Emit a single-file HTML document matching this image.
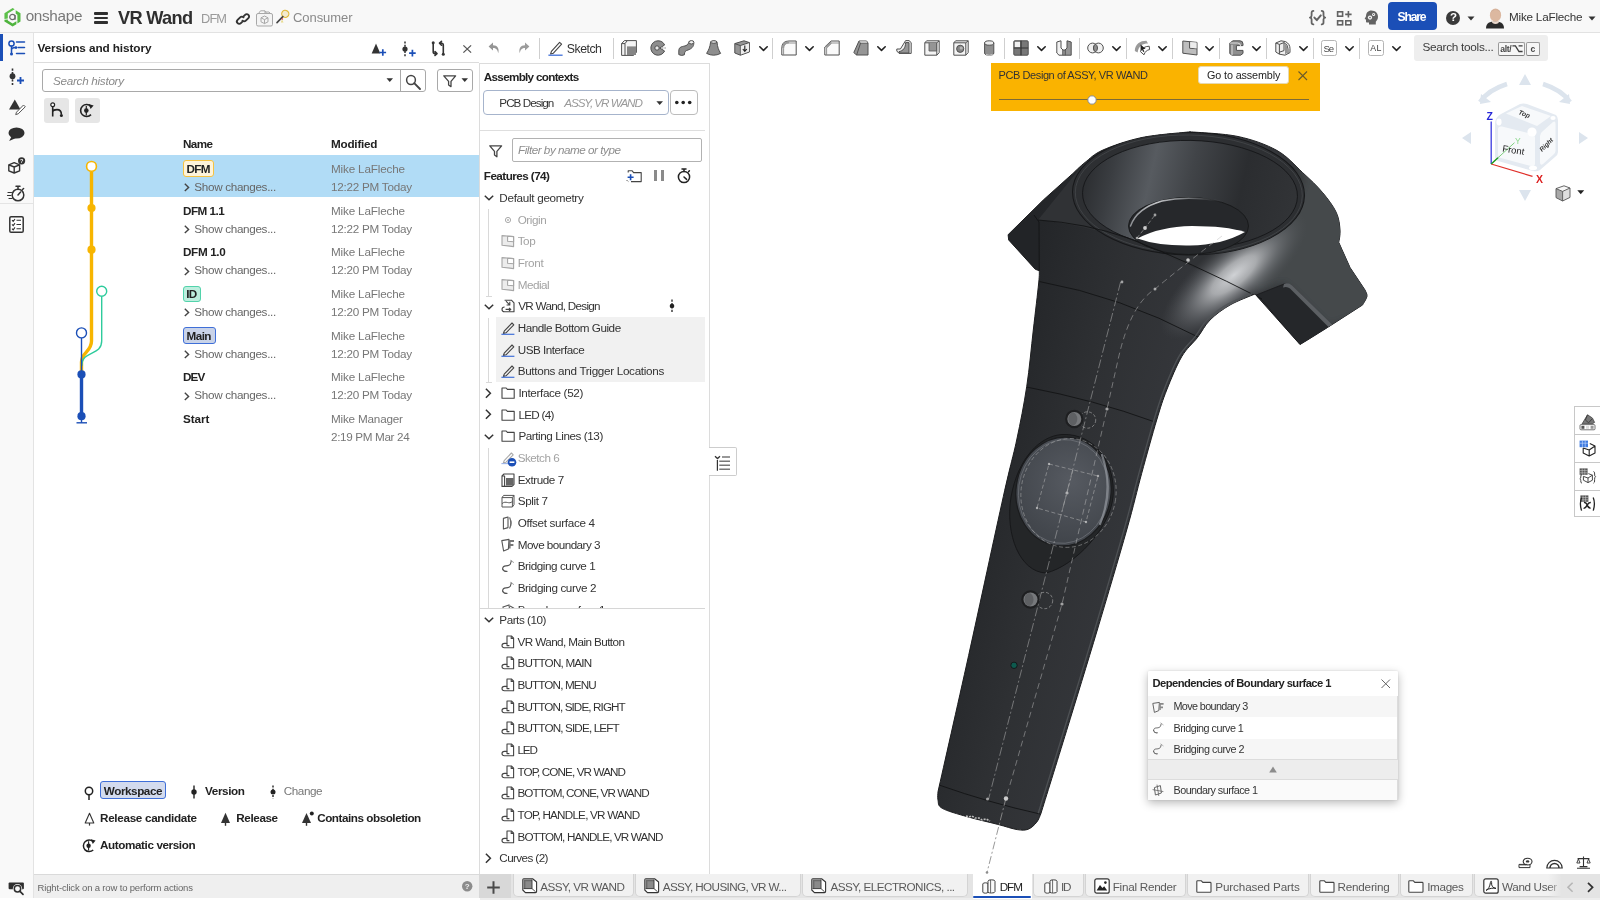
<!DOCTYPE html>
<html><head><meta charset="utf-8"><title>VR Wand</title>
<style>
*{box-sizing:border-box;margin:0;padding:0}
html,body{width:1600px;height:900px;overflow:hidden;background:#fff}
body{font-family:"Liberation Sans",sans-serif;font-size:11.5px;color:#333;position:relative;will-change:transform}
.abs{position:absolute}
.t{position:absolute;white-space:nowrap;line-height:1}
svg{position:absolute;overflow:visible}
#topbar{left:0;top:0;width:1600px;height:33px;background:#f8f8f8;border-bottom:1px solid #e2e2e2}
#rail{left:0;top:33px;width:33.7px;height:865.4px;background:#f9f9f9;border-right:1.5px solid #e3e3e3}
#vpanel{left:33.7px;top:33px;width:445.3px;height:841px;background:#fff}
#vhead{left:33.7px;top:33px;width:445.3px;height:30px;border-bottom:1px solid #dcdcdc;background:#fff}
#vfoot{left:33.7px;top:874px;width:446.3px;height:24.4px;background:#efefef;border-top:1px solid #dadada}
#fpanel{left:479px;top:63px;width:231px;height:811px;background:#fff;border-left:1px solid #dcdcdc;border-right:1px solid #dcdcdc;border-top:1px solid #dcdcdc}
#tabbar{left:480px;top:874px;width:1120px;height:26px;background:#e9e9e9}
.b{font-weight:bold}
.g{color:#767676}
</style></head><body>
<!-- ===== base panels ===== -->
<div id="topbar" class="abs"></div>
<div id="rail" class="abs"></div>
<div id="vpanel" class="abs"></div>
<div id="vhead" class="abs"></div>
<div id="vfoot" class="abs"></div>
<div id="fpanel" class="abs"></div>
<div id="tabbar" class="abs"></div>
<!-- topbar -->
<svg style="left:3.5px;top:7.5px" width="17" height="19" viewBox="0 0 17 19">
<path d="M0.44 5.2 L8.6 0.12 L10.7 1.36 L3.8 5.6 L3.8 10.5 L0.44 10.9 Z" fill="#5cc04a"/>
<path d="M11.7 2.3 L16.5 5.2 L16.5 13.6 L13.4 15.4 L13.4 6.8 L11.7 5.7 Z" fill="#55ba43"/>
<path d="M0.44 11.8 L3.8 11.4 L3.8 12.6 L8.6 15.4 L12.4 13.2 L12.4 16.2 L8.6 18.4 L0.44 13.6 Z" fill="#4fb43e"/>
<circle cx="8.4" cy="9" r="2.7" fill="none" stroke="#6d6d6d" stroke-width="1.2"/>
<path d="M11.1 7 V11.8" stroke="#6d6d6d" stroke-width="1.1"/></svg>
<div class="t" style="left:25.7px;top:7.7px;font-size:15.3px;color:#787878;letter-spacing:-0.33px;">onshape</div>
<div class="abs" style="left:93.8px;top:12.3px;width:14.2px;height:2.6px;background:#2f2f2f;border-radius:1px;"></div>
<div class="abs" style="left:93.8px;top:16.8px;width:14.2px;height:2.6px;background:#2f2f2f;border-radius:1px;"></div>
<div class="abs" style="left:93.8px;top:21.3px;width:14.2px;height:2.6px;background:#2f2f2f;border-radius:1px;"></div>
<div class="t" style="left:118.0px;top:9.2px;font-size:18.2px;color:#2f2f2f;font-weight:bold;letter-spacing:-0.69px;">VR Wand</div>
<div class="t" style="left:201.0px;top:12.6px;font-size:12.8px;color:#9a9a9a;letter-spacing:-0.86px;">DFM</div>
<svg style="left:236.0px;top:11.5px" width="14" height="14" viewBox="0 0 14 14"><g fill="none" stroke="#333" stroke-width="1.9" stroke-linecap="round">
<path d="M6.2 9.9 L4.9 11.2 a2.3 2.3 0 0 1 -3.3 -3.3 L4.2 5.3 a2.3 2.3 0 0 1 3.3 0"/>
<path d="M7.8 4.1 L9.1 2.8 a2.3 2.3 0 0 1 3.3 3.3 L9.8 8.7 a2.3 2.3 0 0 1 -3.3 0"/></g></svg>
<svg style="left:256.0px;top:9.5px" width="17" height="16.5" viewBox="0 0 17 16.5"><g fill="none" stroke="#a8a8a8" stroke-width="1">
<rect x="0.5" y="3.5" width="16" height="12.5" rx="1.5" fill="#f4f4f4"/>
<path d="M2.5 3.5 L4.5 0.8 L9 0.8 L10.5 3.5 M8 2 L13 2 L14.5 3.5"/>
<path d="M8.5 6 L12 7.8 L12 11.8 L8.5 13.6 L5 11.8 L5 7.8 Z M5 7.8 L8.5 9.6 L12 7.8 M8.5 9.6 L8.5 13.6"/></g></svg>
<svg style="left:276.0px;top:10.0px" width="14" height="14" viewBox="0 0 14 14"><ellipse cx="9.3" cy="3.8" rx="3.6" ry="3.5" fill="#f3ead0" stroke="#e2b93b" stroke-width="1.2" transform="rotate(35 9.3 3.8)"/>
<path d="M6.8 6.6 L1 12.6" stroke="#444" stroke-width="1.6" stroke-linecap="round"/>
<path d="M6 9.5 L7.5 12.5 L4.8 12.5 Z" fill="#e8d98a"/><circle cx="6.3" cy="9" r="0.8" fill="#d33"/></svg>
<div class="t" style="left:293.0px;top:10.7px;font-size:13px;color:#8a8a8a;letter-spacing:-0.07px;">Consumer</div>
<svg style="left:1309.0px;top:10.4px" width="17.5" height="15.4" viewBox="0 0 17.5 15.4"><g fill="none" stroke="#636363" stroke-width="1.8" stroke-linecap="round" stroke-linejoin="round"><path d="M4.4 0.9 Q2.6 0.9 2.6 2.8 V5.6 Q2.6 7.4 0.9 7.6 Q2.6 7.8 2.6 9.6 V12.6 Q2.6 14.4 4.4 14.4"/><path d="M12.7 0.9 Q14.5 0.9 14.5 2.8 V5.6 Q14.5 7.4 16.2 7.6 Q14.5 7.8 14.5 9.6 V12.6 Q14.5 14.4 12.7 14.4"/><path d="M5.4 7.6 L7.8 10.2 L11.8 5.4" stroke-width="2"/></g></svg>
<svg style="left:1336.0px;top:9.0px" width="16" height="16" viewBox="0 0 16 16"><g fill="none" stroke="#636363" stroke-width="1.6"><rect x="1.6" y="2.8" width="5" height="4.4"/><rect x="1.6" y="11.8" width="5" height="4"/><rect x="9.8" y="11.8" width="5" height="4"/><path d="M12.4 2 V8.6 M9.2 5.4 H15.6"/></g></svg>
<svg style="left:1363.5px;top:9.5px" width="15" height="15" viewBox="0 0 15 15"><path d="M7.3 0.6 C11.5 0.6 14 3.4 14 6.8 C14 9.3 12.8 10.7 11.8 11.8 L11.8 14.4 L5 14.4 L5 12.6 L3.2 12.6 C2.3 12.6 2 12 2 11.2 L2 9.6 L0.6 9 L2 6.2 C2.2 2.8 4.2 0.6 7.3 0.6 Z" fill="#636363"/>
<circle cx="6" cy="7.6" r="2.1" fill="#f8f8f8"/><circle cx="9.6" cy="4.4" r="1.5" fill="#f8f8f8"/><circle cx="6" cy="7.6" r="0.8" fill="#636363"/><circle cx="9.6" cy="4.4" r="0.6" fill="#636363"/></svg>
<div class="abs" style="left:1387.5px;top:2.0px;width:49.5px;height:27.5px;background:#1b4fb7;border-radius:4px;"></div>
<div class="t" style="left:1397.5px;top:10.6px;font-size:12.2px;color:#fff;font-weight:bold;letter-spacing:-1.20px;">Share</div>
<svg style="left:1446.0px;top:10.5px" width="14" height="14" viewBox="0 0 14 14"><circle cx="7" cy="7" r="7" fill="#3a3a3a"/></svg>
<div class="t" style="left:1450.0px;top:11.9px;font-size:11.5px;color:#fff;font-weight:bold;">?</div>
<svg style="left:1467.0px;top:15.5px" width="8" height="5" viewBox="0 0 8 5"><path d="M0.5 0.5 H7.5 L4 4.5 Z" fill="#333"/></svg>
<svg style="left:1485.5px;top:8.0px" width="18" height="20.5" viewBox="0 0 18 20.5"><path d="M0 20.5 C0 14.5 4 13.4 9 13.4 C14 13.4 18 14.5 18 20.5 Z" fill="#2b2b2b"/>
<ellipse cx="9.5" cy="7.2" rx="5.6" ry="6.6" fill="#dcb8a0"/><path d="M5 12 Q9.5 15.5 13.5 12 L12.5 15 Q9.5 17 6.5 15 Z" fill="#e9d7cb"/>
<path d="M4.2 5 Q9.5 -1.5 15 5 Q13 1.6 9.5 1.6 Q6 1.6 4.2 5Z" fill="#c9a892"/></svg>
<div class="t" style="left:1509.0px;top:11.2px;font-size:11.7px;color:#333;letter-spacing:-0.21px;">Mike LaFleche</div>
<svg style="left:1588.0px;top:15.5px" width="8" height="5" viewBox="0 0 8 5"><path d="M0.5 0.5 H7.5 L4 4.5 Z" fill="#333"/></svg>

<!-- rail -->
<div class="abs" style="left:0.0px;top:34.0px;width:2.5px;height:27.0px;background:#1b4fb7;"></div>
<svg style="left:8.0px;top:40.0px" width="18" height="17" viewBox="0 0 18 17"><g fill="none" stroke="#1b4fb7" stroke-width="1.5" stroke-linecap="round">
<circle cx="3.5" cy="3.5" r="2.6"/><path d="M3.5 6.2 V13.8 M3.5 10.3 C3.5 8.2 5 7.6 7.4 7.6"/><path d="M8.5 2 H16.5 M10.2 7.6 H16.5 M8.5 13.6 H16.5"/></g>
<circle cx="3.5" cy="14" r="1.5" fill="#1b4fb7"/><circle cx="8" cy="7.6" r="1.4" fill="#1b4fb7"/></svg>
<svg style="left:8.0px;top:68.0px" width="18" height="19" viewBox="0 0 18 19"><path d="M4.5 0.5 V18" stroke="#333" stroke-width="1.6" stroke-dasharray="2.2 1.4" fill="none"/><circle cx="4.5" cy="8.2" r="2.9" fill="#333"/>
<path d="M12.5 9 V16 M9 12.5 H16" stroke="#1b4fb7" stroke-width="1.8"/></svg>
<svg style="left:7.5px;top:99.0px" width="19" height="16" viewBox="0 0 19 16"><path d="M6.8 0.5 L12.5 10.5 H1 Z" fill="#333"/><path d="M8.5 13.2 L15.5 6 L17.3 7.8 L10.2 14.8 L7.7 15.6 Z" fill="#fff" stroke="#555" stroke-width="1"/></svg>
<svg style="left:8.0px;top:127.0px" width="17" height="15" viewBox="0 0 17 15"><ellipse cx="8.5" cy="6" rx="8" ry="5.6" fill="#2f2f2f"/><path d="M3.5 9.5 L1.2 14 L8 11 Z" fill="#2f2f2f"/></svg>
<svg style="left:7.5px;top:156.5px" width="18" height="17" viewBox="0 0 18 17"><g fill="none" stroke="#333" stroke-width="1.4" stroke-linejoin="round"><path d="M6.2 5.6 L11.6 7.8 L11.6 13.8 L6.2 16 L0.8 13.8 L0.8 7.8 Z M0.8 7.8 L6.2 10 L11.6 7.8 M6.2 10 V16"/></g>
<circle cx="13.6" cy="3.8" r="3.6" fill="#333"/><text x="13.6" y="6" font-size="5.6" font-weight="bold" fill="#fff" text-anchor="middle" font-family="Liberation Sans">?</text></svg>
<svg style="left:7.0px;top:185.0px" width="19" height="17" viewBox="0 0 19 17"><g fill="none" stroke="#333" stroke-width="1.5" stroke-linecap="round"><circle cx="11" cy="10" r="5.8"/><path d="M9 1.2 H13 M11 1.5 V4 M11 10 L13.6 7 M15.5 4.5 L16.6 3.5"/><path d="M1 7.5 H4.5 M0.5 10.5 H4 M2 13.5 H5" stroke-width="1.2"/></g></svg>
<div class="abs" style="left:0.0px;top:202.5px;width:33.0px;height:1.0px;background:#e4e4e4;"></div>
<svg style="left:9.0px;top:216.0px" width="15" height="17" viewBox="0 0 15 17"><rect x="0.8" y="0.8" width="13.4" height="15.4" rx="1.3" fill="#fff" stroke="#333" stroke-width="1.5"/>
<g stroke="#333" stroke-width="1.1" fill="none"><path d="M7.5 4.3 H12 M7.5 8.5 H12 M7.5 12.7 H12"/><path d="M3 4.2 L4.2 5.4 L6 3 M3 8.4 L4.2 9.6 L6 7.2 M3 12.6 L4.2 13.8 L6 11.4"/></g></svg>
<svg style="left:8.0px;top:882.3px" width="18" height="14" viewBox="0 0 18 14"><rect x="0.6" y="0.4" width="15.3" height="6.8" rx="1" fill="#2f2f2f"/><circle cx="9.5" cy="6.8" r="4.7" fill="#f9f9f9"/><circle cx="9.5" cy="6.8" r="3.2" fill="#f9f9f9" stroke="#2f2f2f" stroke-width="1.5"/><path d="M12 9.4 L15 12.4" stroke="#2f2f2f" stroke-width="1.7" stroke-linecap="round"/></svg>

<!-- versions -->
<div class="t" style="left:37.5px;top:42.6px;font-size:11.8px;color:#222;font-weight:bold;letter-spacing:-0.11px;">Versions and history</div>
<svg style="left:371.0px;top:42.0px" width="18" height="14" viewBox="0 0 18 14"><path d="M5 1.5 L9.3 11.5 H0.7 Z" fill="#333"/><path d="M11.8 7.2 V13.8 M8.5 10.5 H15.1" stroke="#1b4fb7" stroke-width="1.7"/></svg>
<svg style="left:401.0px;top:40.5px" width="18" height="16" viewBox="0 0 18 16"><path d="M4 0.5 V15.5" stroke="#333" stroke-width="1.5" stroke-dasharray="2 1.2"/><circle cx="4" cy="8" r="2.6" fill="#333"/><path d="M11.4 8.8 V15.4 M8.1 12.1 H14.7" stroke="#1b4fb7" stroke-width="1.7"/></svg>
<svg style="left:431.0px;top:41.0px" width="15" height="15" viewBox="0 0 15 15"><g fill="none" stroke="#333" stroke-width="1.6" stroke-linecap="round" stroke-linejoin="round"><path d="M2.2 2 V11 Q2.2 12.6 4 12.6 H5.5 M4 10.6 L6 12.6 L4 14.4"/><path d="M12.3 13 V4 Q12.3 2.2 10.5 2.2 H9 M10.5 0.4 L8.5 2.2 L10.5 4.2"/></g><circle cx="2.2" cy="1.8" r="1.5" fill="#333"/><circle cx="12.3" cy="13.2" r="1.5" fill="#333"/></svg>
<svg style="left:462.5px;top:45.0px" width="8.5" height="8" viewBox="0 0 8.5 8"><path d="M0.4 0.4 L8.1 7.6 M8.1 0.4 L0.4 7.6" stroke="#555" stroke-width="1.3"/></svg>
<div class="abs" style="left:42.0px;top:69.3px;width:384.0px;height:22.6px;background:#fff;border:1px solid #a9a9a9;border-radius:3px;"></div>
<div class="abs" style="left:400.3px;top:69.3px;width:1.0px;height:22.6px;background:#a9a9a9;"></div>
<div class="t" style="left:53.0px;top:75.0px;font-size:11.7px;color:#8a8a8a;font-style:italic;letter-spacing:-0.28px;">Search history</div>
<svg style="left:385.5px;top:78.3px" width="8" height="5" viewBox="0 0 8 5"><path d="M0.5 0.3 H7 L3.75 4 Z" fill="#333"/></svg>
<svg style="left:405.0px;top:74.0px" width="17" height="17" viewBox="0 0 17 17"><circle cx="6" cy="6" r="4.4" fill="none" stroke="#444" stroke-width="1.5"/><path d="M9.2 9.2 L15 15" stroke="#444" stroke-width="1.9" stroke-linecap="round"/></svg>
<div class="abs" style="left:436.8px;top:69.3px;width:35.8px;height:22.6px;background:#fff;border:1px solid #a9a9a9;border-radius:3px;"></div>
<svg style="left:443.0px;top:74.5px" width="14" height="13" viewBox="0 0 14 13"><path d="M0.8 0.8 H12.6 L8 6.4 V11.6 L5.6 10 V6.4 Z" fill="none" stroke="#444" stroke-width="1.3" stroke-linejoin="round"/></svg>
<svg style="left:461.0px;top:78.3px" width="8" height="5" viewBox="0 0 8 5"><path d="M0.5 0.3 H7 L3.75 4 Z" fill="#333"/></svg>
<div class="abs" style="left:44.0px;top:98.0px;width:25.0px;height:24.5px;background:#e6e6e6;border-radius:3px;"></div>
<div class="abs" style="left:74.5px;top:98.0px;width:25.0px;height:24.5px;background:#e6e6e6;border-radius:3px;"></div>
<svg style="left:49.5px;top:102.0px" width="14" height="17" viewBox="0 0 14 17"><circle cx="2.7" cy="2.7" r="1.9" fill="#fff" stroke="#222" stroke-width="1.2"/><path d="M2.7 4.6 V14.5 M2.7 10 C2.7 7.6 5 7.6 7 7.6 C10 7.6 11.4 9.2 11.4 12.4" fill="none" stroke="#222" stroke-width="1.6"/><circle cx="11.4" cy="13.4" r="1.5" fill="#222"/></svg>
<svg style="left:79.0px;top:102.0px" width="16" height="17" viewBox="0 0 16 17"><path d="M12 12.6 A6 6 0 1 1 12 4.4" fill="none" stroke="#222" stroke-width="1.6"/><path d="M9.6 2 L14.6 3.4 L11.6 7 Z" fill="#222"/><path d="M7.3 4 V13.4" stroke="#222" stroke-width="1.2"/><circle cx="7.3" cy="8.6" r="2.3" fill="#222"/></svg>
<div class="t" style="left:183.0px;top:138.3px;font-size:11.7px;color:#222;font-weight:bold;letter-spacing:-0.61px;">Name</div>
<div class="t" style="left:331.0px;top:138.3px;font-size:11.7px;color:#222;font-weight:bold;letter-spacing:-0.22px;">Modified</div>
<div class="abs" style="left:33.7px;top:154.7px;width:445.3px;height:42.5px;background:#b1dcf6;"></div>
<div class="abs" style="left:182.5px;top:160.3px;width:31.3px;height:16.3px;background:#fdf3da;border:1px solid #f5c242;border-radius:3px;"></div>
<div class="t" style="left:186.6px;top:163.0px;font-size:11.7px;color:#222;font-weight:bold;letter-spacing:-0.76px;">DFM</div>
<svg style="left:184.3px;top:183.3px" width="6" height="9" viewBox="0 0 6 9"><path d="M0.8 0.8 L4.6 4.4 L0.8 8" fill="none" stroke="#444" stroke-width="1.4"/></svg>
<div class="t" style="left:194.3px;top:180.8px;font-size:11.7px;color:#666;letter-spacing:-0.32px;">Show changes...</div>
<div class="t" style="left:331.0px;top:163.0px;font-size:11.7px;color:#777;letter-spacing:-0.17px;">Mike LaFleche</div>
<div class="t" style="left:331.0px;top:180.8px;font-size:11.7px;color:#777;letter-spacing:-0.25px;">12:22 PM Today</div>
<div class="t" style="left:183.0px;top:204.7px;font-size:11.7px;color:#222;font-weight:bold;letter-spacing:-0.52px;">DFM 1.1</div>
<svg style="left:184.3px;top:225.0px" width="6" height="9" viewBox="0 0 6 9"><path d="M0.8 0.8 L4.6 4.4 L0.8 8" fill="none" stroke="#444" stroke-width="1.4"/></svg>
<div class="t" style="left:194.3px;top:222.5px;font-size:11.7px;color:#666;letter-spacing:-0.32px;">Show changes...</div>
<div class="t" style="left:331.0px;top:204.7px;font-size:11.7px;color:#777;letter-spacing:-0.17px;">Mike LaFleche</div>
<div class="t" style="left:331.0px;top:222.5px;font-size:11.7px;color:#777;letter-spacing:-0.25px;">12:22 PM Today</div>
<div class="t" style="left:183.0px;top:246.4px;font-size:11.7px;color:#222;font-weight:bold;letter-spacing:-0.34px;">DFM 1.0</div>
<svg style="left:184.3px;top:266.7px" width="6" height="9" viewBox="0 0 6 9"><path d="M0.8 0.8 L4.6 4.4 L0.8 8" fill="none" stroke="#444" stroke-width="1.4"/></svg>
<div class="t" style="left:194.3px;top:264.1px;font-size:11.7px;color:#666;letter-spacing:-0.32px;">Show changes...</div>
<div class="t" style="left:331.0px;top:246.4px;font-size:11.7px;color:#777;letter-spacing:-0.17px;">Mike LaFleche</div>
<div class="t" style="left:331.0px;top:264.1px;font-size:11.7px;color:#777;letter-spacing:-0.25px;">12:20 PM Today</div>
<div class="abs" style="left:182.5px;top:285.6px;width:18.5px;height:16.8px;background:#bdeede;border:1px solid #52d3ab;border-radius:3px;"></div>
<div class="t" style="left:186.2px;top:288.1px;font-size:11.7px;color:#222;font-weight:bold;letter-spacing:-0.69px;">ID</div>
<svg style="left:184.3px;top:308.4px" width="6" height="9" viewBox="0 0 6 9"><path d="M0.8 0.8 L4.6 4.4 L0.8 8" fill="none" stroke="#444" stroke-width="1.4"/></svg>
<div class="t" style="left:194.3px;top:305.9px;font-size:11.7px;color:#666;letter-spacing:-0.32px;">Show changes...</div>
<div class="t" style="left:331.0px;top:288.1px;font-size:11.7px;color:#777;letter-spacing:-0.17px;">Mike LaFleche</div>
<div class="t" style="left:331.0px;top:305.9px;font-size:11.7px;color:#777;letter-spacing:-0.25px;">12:20 PM Today</div>
<div class="abs" style="left:182.5px;top:327.3px;width:33.0px;height:16.6px;background:#c9d3e8;border:1px solid #3f6fd8;border-radius:3px;"></div>
<div class="t" style="left:186.6px;top:329.8px;font-size:11.7px;color:#222;font-weight:bold;letter-spacing:-0.58px;">Main</div>
<svg style="left:184.3px;top:350.1px" width="6" height="9" viewBox="0 0 6 9"><path d="M0.8 0.8 L4.6 4.4 L0.8 8" fill="none" stroke="#444" stroke-width="1.4"/></svg>
<div class="t" style="left:194.3px;top:347.6px;font-size:11.7px;color:#666;letter-spacing:-0.32px;">Show changes...</div>
<div class="t" style="left:331.0px;top:329.8px;font-size:11.7px;color:#777;letter-spacing:-0.17px;">Mike LaFleche</div>
<div class="t" style="left:331.0px;top:347.6px;font-size:11.7px;color:#777;letter-spacing:-0.25px;">12:20 PM Today</div>
<div class="t" style="left:183.0px;top:371.4px;font-size:11.7px;color:#222;font-weight:bold;letter-spacing:-0.87px;">DEV</div>
<svg style="left:184.3px;top:391.8px" width="6" height="9" viewBox="0 0 6 9"><path d="M0.8 0.8 L4.6 4.4 L0.8 8" fill="none" stroke="#444" stroke-width="1.4"/></svg>
<div class="t" style="left:194.3px;top:389.2px;font-size:11.7px;color:#666;letter-spacing:-0.32px;">Show changes...</div>
<div class="t" style="left:331.0px;top:371.4px;font-size:11.7px;color:#777;letter-spacing:-0.17px;">Mike LaFleche</div>
<div class="t" style="left:331.0px;top:389.2px;font-size:11.7px;color:#777;letter-spacing:-0.25px;">12:20 PM Today</div>
<div class="t" style="left:183.0px;top:413.1px;font-size:11.7px;color:#222;font-weight:bold;letter-spacing:-0.09px;">Start</div>
<div class="t" style="left:331.0px;top:413.1px;font-size:11.7px;color:#777;letter-spacing:-0.19px;">Mike Manager</div>
<div class="t" style="left:331.0px;top:430.9px;font-size:11.7px;color:#777;letter-spacing:-0.34px;">2:19 PM Mar 24</div>
<svg style="left:0.0px;top:0.0px" width="200" height="440" viewBox="0 0 200 440"><path d="M91.5 172 V341 C91.5 352 81.5 352 81.5 362 V374" fill="none" stroke="#f7b500" stroke-width="3.4"/><path d="M101.7 296.5 V341 C101.7 356 81.8 350 81.8 366" fill="none" stroke="#2ecb9c" stroke-width="1.4"/><path d="M81.5 338 V374" fill="none" stroke="#1b4fb7" stroke-width="1.4"/><path d="M81.5 374 V416" fill="none" stroke="#1b4fb7" stroke-width="3.4"/><path d="M76.5 422.8 H87" stroke="#1b4fb7" stroke-width="1.4"/><path d="M81.5 416 V422.8" stroke="#1b4fb7" stroke-width="1.4"/><circle cx="91.5" cy="166.4" r="4.9" fill="#fff" stroke="#f7b500" stroke-width="1.6"/><circle cx="91.5" cy="208" r="4.1" fill="#f7b500"/><circle cx="91.5" cy="249.7" r="4.1" fill="#f7b500"/><circle cx="101.7" cy="291.2" r="5" fill="#fff" stroke="#2ecb9c" stroke-width="1.4"/><circle cx="81.5" cy="332.9" r="5" fill="#fff" stroke="#1b4fb7" stroke-width="1.4"/><circle cx="81.5" cy="374.4" r="4.1" fill="#1b4fb7"/><circle cx="81.5" cy="416.2" r="4.1" fill="#1b4fb7"/></svg>
<svg style="left:84.0px;top:785.5px" width="10" height="15" viewBox="0 0 10 15"><circle cx="5" cy="5" r="3.7" fill="#fff" stroke="#222" stroke-width="1.5"/><path d="M5 8.7 V14" stroke="#222" stroke-width="1.5"/></svg>
<div class="abs" style="left:100.0px;top:781.3px;width:66.0px;height:18.2px;background:#d3dbee;border:1px solid #3f6fd8;border-radius:3px;"></div>
<div class="t" style="left:103.8px;top:785.4px;font-size:11.7px;color:#222;font-weight:bold;letter-spacing:-0.43px;">Workspace</div>
<svg style="left:190.0px;top:784.5px" width="8" height="14" viewBox="0 0 8 14"><path d="M4 0.5 V13.5" stroke="#222" stroke-width="1.4"/><circle cx="4" cy="7" r="2.7" fill="#222"/></svg>
<div class="t" style="left:205.0px;top:785.4px;font-size:11.7px;color:#222;font-weight:bold;letter-spacing:-0.37px;">Version</div>
<svg style="left:269.0px;top:784.5px" width="8" height="14" viewBox="0 0 8 14"><path d="M4 0.5 V13.5" stroke="#222" stroke-width="1.4" stroke-dasharray="2 1.2"/><circle cx="4" cy="7" r="2.5" fill="#222"/></svg>
<div class="t" style="left:283.8px;top:785.4px;font-size:11.7px;color:#777;letter-spacing:-0.45px;">Change</div>
<svg style="left:83.5px;top:811.5px" width="11" height="14" viewBox="0 0 11 14"><path d="M5.5 1.2 L9.8 11 H1.2 Z" fill="#fff" stroke="#333" stroke-width="1.1" stroke-linejoin="round"/><path d="M5.5 11 V13.6" stroke="#333" stroke-width="1.2"/></svg>
<div class="t" style="left:100.0px;top:812.4px;font-size:11.7px;color:#222;font-weight:bold;letter-spacing:-0.31px;">Release candidate</div>
<svg style="left:219.5px;top:811.5px" width="11" height="14" viewBox="0 0 11 14"><path d="M5.5 0.8 L10 11 H1 Z" fill="#333"/><path d="M5.5 11 V13.8" stroke="#333" stroke-width="1.4"/></svg>
<div class="t" style="left:236.3px;top:812.4px;font-size:11.7px;color:#222;font-weight:bold;letter-spacing:-0.40px;">Release</div>
<svg style="left:300.5px;top:810.5px" width="13" height="15" viewBox="0 0 13 15"><path d="M5.5 2 L10 12 H1 Z" fill="#333"/><path d="M5.5 12 V14.8" stroke="#333" stroke-width="1.4"/><circle cx="10.8" cy="2.6" r="2" fill="#222"/></svg>
<div class="t" style="left:317.2px;top:812.4px;font-size:11.7px;color:#222;font-weight:bold;letter-spacing:-0.46px;">Contains obsoletion</div>
<svg style="left:81.5px;top:838.0px" width="15" height="15" viewBox="0 0 15 15"><path d="M11.2 12 A5.8 5.8 0 1 1 11.2 3.6" fill="none" stroke="#222" stroke-width="1.5"/><path d="M8.8 1.2 L13.6 2.6 L10.8 6 Z" fill="#222"/><path d="M6.6 3.2 V12.4" stroke="#222" stroke-width="1.1"/><circle cx="6.6" cy="7.8" r="2.2" fill="#222"/></svg>
<div class="t" style="left:100.0px;top:839.4px;font-size:11.7px;color:#222;font-weight:bold;letter-spacing:-0.40px;">Automatic version</div>
<div class="t" style="left:37.5px;top:882.8px;font-size:9.5px;color:#666;letter-spacing:-0.16px;">Right-click on a row to perform actions</div>
<svg style="left:461.6px;top:881.4px" width="10.5" height="10.5" viewBox="0 0 10.5 10.5"><circle cx="5.2" cy="5.2" r="5.2" fill="#8c8c8c"/><text x="5.2" y="8.2" font-size="8" font-weight="bold" fill="#eee" text-anchor="middle" font-family="Liberation Sans">?</text></svg>

<!-- features -->
<div class="t" style="left:483.8px;top:71.2px;font-size:11.7px;color:#222;font-weight:bold;letter-spacing:-0.70px;">Assembly contexts</div>
<div class="abs" style="left:483.3px;top:89.8px;width:185.4px;height:24.8px;background:#fff;border:1px solid #a6b4cc;border-radius:4px;"></div>
<div class="t" style="left:499.3px;top:96.6px;font-size:11.7px;color:#333;letter-spacing:-0.96px;">PCB Design</div>
<div class="t" style="left:564.2px;top:96.6px;font-size:11.7px;color:#9a9a9a;font-style:italic;letter-spacing:-1.07px;">ASSY, VR WAND</div>
<svg style="left:656.0px;top:100.6px" width="8" height="5" viewBox="0 0 8 5"><path d="M0.4 0.3 H7 L3.7 4 Z" fill="#333"/></svg>
<div class="abs" style="left:669.6px;top:89.8px;width:28.0px;height:24.8px;background:#fff;border:1px solid #bcbcbc;border-radius:4px;"></div>
<svg style="left:674.0px;top:100.0px" width="20" height="5" viewBox="0 0 20 5"><circle cx="2.8" cy="2.5" r="1.8" fill="#222"/><circle cx="9.2" cy="2.5" r="1.8" fill="#222"/><circle cx="15.7" cy="2.5" r="1.8" fill="#222"/></svg>
<div class="abs" style="left:480.0px;top:130.3px;width:225.0px;height:1.0px;background:#dedede;"></div>
<svg style="left:488.5px;top:144.5px" width="14" height="13" viewBox="0 0 14 13"><path d="M0.8 0.8 H12.6 L7.9 6.4 V11.8 L5.5 10 V6.4 Z" fill="none" stroke="#444" stroke-width="1.3" stroke-linejoin="round"/></svg>
<div class="abs" style="left:512.2px;top:137.5px;width:190.2px;height:24.3px;background:#fff;border:1px solid #b2b2b2;border-radius:2px;"></div>
<div class="t" style="left:518.0px;top:144.0px;font-size:11.7px;color:#8e8e8e;font-style:italic;letter-spacing:-0.48px;">Filter by name or type</div>
<div class="t" style="left:483.8px;top:169.5px;font-size:11.7px;color:#222;font-weight:bold;letter-spacing:-0.55px;">Features (74)</div>
<svg style="left:626.0px;top:169.5px" width="16" height="12.5" viewBox="0 0 16 12.5"><path d="M2.2 2.6 V0.8 H6.2 L7.6 2.6 H15.2 V11.6 H5" fill="none" stroke="#444" stroke-width="1.1" stroke-linejoin="round"/><path d="M1 10 Q1 11.6 2.6 11.6" fill="none" stroke="#444" stroke-width="1" stroke-dasharray="1 1"/><path d="M4.6 4.2 V10.2 M1.6 7.2 H7.6" stroke="#1b4fb7" stroke-width="1.6"/></svg>
<div class="abs" style="left:654.3px;top:170.0px;width:3.2px;height:11.3px;background:#8a8a8a;"></div>
<div class="abs" style="left:661.0px;top:170.0px;width:3.2px;height:11.3px;background:#8a8a8a;"></div>
<svg style="left:677.0px;top:167.5px" width="14" height="15.5" viewBox="0 0 14 15.5"><g fill="none" stroke="#222" stroke-width="1.5" stroke-linecap="round"><circle cx="7" cy="9" r="5.6"/><path d="M5 1 H9 M7 1.2 V3.4 M7 9 L9.6 11.4 M11.6 3.6 L12.4 2.8"/></g></svg>
<svg style="left:483.8px;top:195.2px" width="10" height="6" viewBox="0 0 10 6"><path d="M0.8 0.8 L5 4.8 L9.2 0.8" fill="none" stroke="#333" stroke-width="1.5"/></svg>
<div class="t" style="left:499.3px;top:192.0px;font-size:11.7px;color:#333;letter-spacing:-0.30px;">Default geometry</div>
<div class="abs" style="left:488.0px;top:209.0px;width:1.0px;height:86.5px;background:#d9d9d9;"></div>
<div class="abs" style="left:485.5px;top:295.5px;width:6.0px;height:1.0px;background:#d9d9d9;"></div>
<svg style="left:500.5px;top:212.5px" width="14" height="14" viewBox="0 0 14 14"><circle cx="7" cy="7" r="2.6" fill="none" stroke="#aaa" stroke-width="1"/><circle cx="7" cy="7" r="0.9" fill="#aaa"/></svg>
<div class="t" style="left:517.7px;top:213.6px;font-size:11.7px;color:#a3a3a3;letter-spacing:-0.44px;">Origin</div>
<svg style="left:500.5px;top:234.1px" width="14" height="14" viewBox="0 0 14 14"><g fill="none" stroke="#a6a6a6" stroke-width="1.1" stroke-linejoin="round"><path d="M1 1.6 L12.6 2.6 V12.6 L1 11.2 Z" fill="#ececec"/><path d="M6.6 2.2 V7.2 L12.6 7.8 V2.6 Z" fill="#fff"/></g></svg>
<div class="t" style="left:517.7px;top:235.3px;font-size:11.7px;color:#a3a3a3;letter-spacing:-0.42px;">Top</div>
<svg style="left:500.5px;top:255.8px" width="14" height="14" viewBox="0 0 14 14"><g fill="none" stroke="#a6a6a6" stroke-width="1.1" stroke-linejoin="round"><path d="M1 1.6 L12.6 2.6 V12.6 L1 11.2 Z" fill="#ececec"/><path d="M6.6 2.2 V7.2 L12.6 7.8 V2.6 Z" fill="#fff"/></g></svg>
<div class="t" style="left:517.7px;top:257.0px;font-size:11.7px;color:#a3a3a3;letter-spacing:-0.32px;">Front</div>
<svg style="left:500.5px;top:277.5px" width="14" height="14" viewBox="0 0 14 14"><g fill="none" stroke="#a6a6a6" stroke-width="1.1" stroke-linejoin="round"><path d="M1 1.6 L12.6 2.6 V12.6 L1 11.2 Z" fill="#ececec"/><path d="M6.6 2.2 V7.2 L12.6 7.8 V2.6 Z" fill="#fff"/></g></svg>
<div class="t" style="left:517.7px;top:278.6px;font-size:11.7px;color:#a3a3a3;letter-spacing:-0.49px;">Medial</div>
<svg style="left:483.8px;top:303.6px" width="10" height="6" viewBox="0 0 10 6"><path d="M0.8 0.8 L5 4.8 L9.2 0.8" fill="none" stroke="#333" stroke-width="1.5"/></svg>
<svg style="left:500.5px;top:299.2px" width="14" height="14" viewBox="0 0 14 14"><g fill="none" stroke="#444" stroke-width="1.1" stroke-linejoin="round"><path d="M3.6 1.2 H10.4 L13 3.8 V12.8 H3.6 Q1 12.8 1 10.2 Q1 8 3.6 8"/><path d="M5 2.2 L8.6 5.8 M8.8 2.8 V6 H5.6"/><path d="M4.6 10.4 H9.6 M8 8.8 L9.8 10.4 L8 12"/></g></svg>
<div class="t" style="left:518.3px;top:300.3px;font-size:11.7px;color:#333;letter-spacing:-0.73px;">VR Wand, Design</div>
<svg style="left:668.5px;top:299.2px" width="6" height="14" viewBox="0 0 6 14"><path d="M3 0.5 V13.5" stroke="#222" stroke-width="1.3" stroke-dasharray="2.2 1.2"/><circle cx="3" cy="7" r="2.3" fill="#222"/></svg>
<div class="abs" style="left:496.4px;top:317.4px;width:208.4px;height:64.6px;background:#f1f1f1;"></div>
<div class="abs" style="left:488.0px;top:318.0px;width:1.0px;height:64.0px;background:#d9d9d9;"></div>
<div class="abs" style="left:485.5px;top:382.0px;width:6.0px;height:1.0px;background:#d9d9d9;"></div>
<svg style="left:500.5px;top:320.8px" width="14" height="14" viewBox="0 0 14 14"><path d="M3.2 10.2 L11 2 L12.8 3.8 L5 11.8 L2.4 12.4 Z" fill="none" stroke="#444" stroke-width="1.1" stroke-linejoin="round"/><path d="M0.4 13.3 H13.4" stroke="#3f6fd8" stroke-width="1.2"/></svg>
<div class="t" style="left:517.7px;top:322.0px;font-size:11.7px;color:#333;letter-spacing:-0.46px;">Handle Bottom Guide</div>
<svg style="left:500.5px;top:342.5px" width="14" height="14" viewBox="0 0 14 14"><path d="M3.2 10.2 L11 2 L12.8 3.8 L5 11.8 L2.4 12.4 Z" fill="none" stroke="#444" stroke-width="1.1" stroke-linejoin="round"/><path d="M0.4 13.3 H13.4" stroke="#3f6fd8" stroke-width="1.2"/></svg>
<div class="t" style="left:517.7px;top:343.6px;font-size:11.7px;color:#333;letter-spacing:-0.48px;">USB Interface</div>
<svg style="left:500.5px;top:364.2px" width="14" height="14" viewBox="0 0 14 14"><path d="M3.2 10.2 L11 2 L12.8 3.8 L5 11.8 L2.4 12.4 Z" fill="none" stroke="#444" stroke-width="1.1" stroke-linejoin="round"/><path d="M0.4 13.3 H13.4" stroke="#3f6fd8" stroke-width="1.2"/></svg>
<div class="t" style="left:517.7px;top:365.3px;font-size:11.7px;color:#333;letter-spacing:-0.31px;">Buttons and Trigger Locations</div>
<svg style="left:485.0px;top:387.5px" width="7" height="11" viewBox="0 0 7 11"><path d="M0.9 0.8 L5.4 5.3 L0.9 9.8" fill="none" stroke="#333" stroke-width="1.5"/></svg>
<svg style="left:500.5px;top:385.8px" width="14" height="14" viewBox="0 0 14 14"><path d="M1 2 H5.2 L6.4 3.4 H13.2 V12.2 H1 Z" fill="#fff" stroke="#444" stroke-width="1.1" stroke-linejoin="round"/></svg>
<div class="t" style="left:518.4px;top:387.0px;font-size:11.7px;color:#333;letter-spacing:-0.35px;">Interface (52)</div>
<svg style="left:485.0px;top:409.2px" width="7" height="11" viewBox="0 0 7 11"><path d="M0.9 0.8 L5.4 5.3 L0.9 9.8" fill="none" stroke="#333" stroke-width="1.5"/></svg>
<svg style="left:500.5px;top:407.5px" width="14" height="14" viewBox="0 0 14 14"><path d="M1 2 H5.2 L6.4 3.4 H13.2 V12.2 H1 Z" fill="#fff" stroke="#444" stroke-width="1.1" stroke-linejoin="round"/></svg>
<div class="t" style="left:518.4px;top:408.6px;font-size:11.7px;color:#333;letter-spacing:-0.71px;">LED (4)</div>
<svg style="left:483.8px;top:433.6px" width="10" height="6" viewBox="0 0 10 6"><path d="M0.8 0.8 L5 4.8 L9.2 0.8" fill="none" stroke="#333" stroke-width="1.5"/></svg>
<svg style="left:500.5px;top:429.2px" width="14" height="14" viewBox="0 0 14 14"><path d="M1 2 H5.2 L6.4 3.4 H13.2 V12.2 H1 Z" fill="#fff" stroke="#444" stroke-width="1.1" stroke-linejoin="round"/></svg>
<div class="t" style="left:518.4px;top:430.3px;font-size:11.7px;color:#333;letter-spacing:-0.43px;">Parting Lines (13)</div>
<div class="abs" style="left:488.0px;top:447.5px;width:1.0px;height:160.0px;background:#d9d9d9;"></div>
<svg style="left:500.5px;top:450.8px" width="14" height="14" viewBox="0 0 14 14"><path d="M3.2 9.6 L10.4 2 L12.2 3.8 L5 11.2 L2.4 11.8 Z" fill="none" stroke="#aaa" stroke-width="1.1" stroke-linejoin="round"/><path d="M0.4 12.6 H8" stroke="#9bb3e6" stroke-width="1.1"/><circle cx="11" cy="11.2" r="4.3" fill="#1b4fb7"/><path d="M8.6 11.2 H13.4" stroke="#fff" stroke-width="1.6"/></svg>
<div class="t" style="left:517.7px;top:452.0px;font-size:11.7px;color:#a3a3a3;letter-spacing:-0.50px;">Sketch 6</div>
<svg style="left:500.5px;top:472.5px" width="14" height="14" viewBox="0 0 14 14"><g stroke="#444" stroke-width="1.1" fill="none" stroke-linejoin="round"><path d="M3 1 H13 V11.4 L11 13.4 H1 V3 Z"/><path d="M1 3 H3.6 V13"/></g><rect x="5" y="5" width="7.6" height="7.6" fill="#666"/></svg>
<div class="t" style="left:517.7px;top:473.7px;font-size:11.7px;color:#333;letter-spacing:-0.44px;">Extrude 7</div>
<svg style="left:500.5px;top:494.2px" width="14" height="14" viewBox="0 0 14 14"><g stroke="#555" stroke-width="1" fill="none" stroke-linejoin="round"><path d="M2.6 1.4 H13 V10.6 L11.4 13 H1 V3.6 Z"/><path d="M1 3.6 H11.4 V13 M11.4 3.6 L13 1.4"/><path d="M1 9.6 C5 6 8 11 11.4 7.4"/></g></svg>
<div class="t" style="left:517.7px;top:495.3px;font-size:11.7px;color:#333;letter-spacing:-0.35px;">Split 7</div>
<svg style="left:500.5px;top:515.9px" width="14" height="14" viewBox="0 0 14 14"><g stroke="#555" stroke-width="1.1" fill="none" stroke-linejoin="round"><path d="M2.4 2.4 L7 1 V11.6 L2.4 13 Z"/><path d="M8.6 1.4 Q11 7 8.6 12.6"/></g><path d="M9 2 Q12.6 7 9 12.4 Q10.6 7 9 2Z" fill="#777"/></svg>
<div class="t" style="left:517.7px;top:517.0px;font-size:11.7px;color:#333;letter-spacing:-0.33px;">Offset surface 4</div>
<svg style="left:500.5px;top:537.5px" width="14" height="14" viewBox="0 0 14 14"><g stroke="#555" stroke-width="1.1" fill="none" stroke-linejoin="round"><path d="M0.8 2.6 L8 1.4 L7.4 11 L2.6 13 Z"/></g><path d="M8 2 H13 V4 H9.6 V6 H12.4 V8 H9.6 V10.4 H8 Z" fill="#777"/></svg>
<div class="t" style="left:517.7px;top:538.7px;font-size:11.7px;color:#333;letter-spacing:-0.54px;">Move boundary 3</div>
<svg style="left:500.5px;top:559.2px" width="14" height="14" viewBox="0 0 14 14"><g stroke="#555" stroke-width="1.1" fill="none" stroke-linecap="round"><path d="M1.6 10 C1.6 5.6 5 7.6 8 6.2 C11 4.8 9 2.6 10.6 2"/><path d="M1.6 10 C2.4 12 4.4 12.6 6 12.4" stroke-width="1.2"/><path d="M9.6 1.4 L12.6 3.4" stroke="#999" stroke-width="0.9"/></g></svg>
<div class="t" style="left:517.7px;top:560.3px;font-size:11.7px;color:#333;letter-spacing:-0.43px;">Bridging curve 1</div>
<svg style="left:500.5px;top:580.9px" width="14" height="14" viewBox="0 0 14 14"><g stroke="#555" stroke-width="1.1" fill="none" stroke-linecap="round"><path d="M1.6 10 C1.6 5.6 5 7.6 8 6.2 C11 4.8 9 2.6 10.6 2"/><path d="M1.6 10 C2.4 12 4.4 12.6 6 12.4" stroke-width="1.2"/><path d="M9.6 1.4 L12.6 3.4" stroke="#999" stroke-width="0.9"/></g></svg>
<div class="t" style="left:517.7px;top:582.0px;font-size:11.7px;color:#333;letter-spacing:-0.38px;">Bridging curve 2</div>
<svg style="left:500.5px;top:602.5px" width="14" height="14" viewBox="0 0 14 14"><g stroke="#555" stroke-width="1.1" fill="none"><path d="M2 4 L8 2 L9 10 L3 12 Z"/><path d="M9 3 L12.6 5 L11 12"/></g></svg>
<div class="t" style="left:517.7px;top:603.7px;font-size:11.7px;color:#333;letter-spacing:-0.79px;">Boundary surface 1</div>
<div class="abs" style="left:480.0px;top:608.2px;width:229.0px;height:7.4px;background:#fff;"></div>
<div class="abs" style="left:480.0px;top:607.8px;width:225.0px;height:1.0px;background:#d6d6d6;"></div>
<svg style="left:483.8px;top:617.2px" width="10" height="6" viewBox="0 0 10 6"><path d="M0.8 0.8 L5 4.8 L9.2 0.8" fill="none" stroke="#333" stroke-width="1.5"/></svg>
<div class="t" style="left:499.3px;top:613.9px;font-size:11.7px;color:#333;letter-spacing:-0.46px;">Parts (10)</div>
<svg style="left:500.5px;top:634.5px" width="14" height="14" viewBox="0 0 14 14"><g fill="none" stroke="#444" stroke-width="1.1" stroke-linejoin="round"><path d="M6 1 H10.4 L12.6 3.2 V12.8 H3.4 Q1 12.8 1 10.6 Q1 8.4 3.4 8.4 H6 Z"/><path d="M10.2 1.2 V3.4 H12.4"/><path d="M6 8.4 V10.6 H8.4"/></g></svg>
<div class="t" style="left:517.5px;top:635.6px;font-size:11.7px;color:#333;letter-spacing:-0.58px;">VR Wand, Main Button</div>
<svg style="left:500.5px;top:656.1px" width="14" height="14" viewBox="0 0 14 14"><g fill="none" stroke="#444" stroke-width="1.1" stroke-linejoin="round"><path d="M6 1 H10.4 L12.6 3.2 V12.8 H3.4 Q1 12.8 1 10.6 Q1 8.4 3.4 8.4 H6 Z"/><path d="M10.2 1.2 V3.4 H12.4"/><path d="M6 8.4 V10.6 H8.4"/></g></svg>
<div class="t" style="left:517.5px;top:657.3px;font-size:11.7px;color:#333;letter-spacing:-0.80px;">BUTTON, MAIN</div>
<svg style="left:500.5px;top:677.8px" width="14" height="14" viewBox="0 0 14 14"><g fill="none" stroke="#444" stroke-width="1.1" stroke-linejoin="round"><path d="M6 1 H10.4 L12.6 3.2 V12.8 H3.4 Q1 12.8 1 10.6 Q1 8.4 3.4 8.4 H6 Z"/><path d="M10.2 1.2 V3.4 H12.4"/><path d="M6 8.4 V10.6 H8.4"/></g></svg>
<div class="t" style="left:517.5px;top:679.0px;font-size:11.7px;color:#333;letter-spacing:-0.86px;">BUTTON, MENU</div>
<svg style="left:500.5px;top:699.5px" width="14" height="14" viewBox="0 0 14 14"><g fill="none" stroke="#444" stroke-width="1.1" stroke-linejoin="round"><path d="M6 1 H10.4 L12.6 3.2 V12.8 H3.4 Q1 12.8 1 10.6 Q1 8.4 3.4 8.4 H6 Z"/><path d="M10.2 1.2 V3.4 H12.4"/><path d="M6 8.4 V10.6 H8.4"/></g></svg>
<div class="t" style="left:517.5px;top:700.6px;font-size:11.7px;color:#333;letter-spacing:-0.90px;">BUTTON, SIDE, RIGHT</div>
<svg style="left:500.5px;top:721.1px" width="14" height="14" viewBox="0 0 14 14"><g fill="none" stroke="#444" stroke-width="1.1" stroke-linejoin="round"><path d="M6 1 H10.4 L12.6 3.2 V12.8 H3.4 Q1 12.8 1 10.6 Q1 8.4 3.4 8.4 H6 Z"/><path d="M10.2 1.2 V3.4 H12.4"/><path d="M6 8.4 V10.6 H8.4"/></g></svg>
<div class="t" style="left:517.5px;top:722.3px;font-size:11.7px;color:#333;letter-spacing:-0.85px;">BUTTON, SIDE, LEFT</div>
<svg style="left:500.5px;top:742.8px" width="14" height="14" viewBox="0 0 14 14"><g fill="none" stroke="#444" stroke-width="1.1" stroke-linejoin="round"><path d="M6 1 H10.4 L12.6 3.2 V12.8 H3.4 Q1 12.8 1 10.6 Q1 8.4 3.4 8.4 H6 Z"/><path d="M10.2 1.2 V3.4 H12.4"/><path d="M6 8.4 V10.6 H8.4"/></g></svg>
<div class="t" style="left:517.5px;top:744.0px;font-size:11.7px;color:#333;letter-spacing:-1.18px;">LED</div>
<svg style="left:500.5px;top:764.5px" width="14" height="14" viewBox="0 0 14 14"><g fill="none" stroke="#444" stroke-width="1.1" stroke-linejoin="round"><path d="M6 1 H10.4 L12.6 3.2 V12.8 H3.4 Q1 12.8 1 10.6 Q1 8.4 3.4 8.4 H6 Z"/><path d="M10.2 1.2 V3.4 H12.4"/><path d="M6 8.4 V10.6 H8.4"/></g></svg>
<div class="t" style="left:517.5px;top:765.6px;font-size:11.7px;color:#333;letter-spacing:-0.90px;">TOP, CONE, VR WAND</div>
<svg style="left:500.5px;top:786.2px" width="14" height="14" viewBox="0 0 14 14"><g fill="none" stroke="#444" stroke-width="1.1" stroke-linejoin="round"><path d="M6 1 H10.4 L12.6 3.2 V12.8 H3.4 Q1 12.8 1 10.6 Q1 8.4 3.4 8.4 H6 Z"/><path d="M10.2 1.2 V3.4 H12.4"/><path d="M6 8.4 V10.6 H8.4"/></g></svg>
<div class="t" style="left:517.5px;top:787.3px;font-size:11.7px;color:#333;letter-spacing:-0.96px;">BOTTOM, CONE, VR WAND</div>
<svg style="left:500.5px;top:807.8px" width="14" height="14" viewBox="0 0 14 14"><g fill="none" stroke="#444" stroke-width="1.1" stroke-linejoin="round"><path d="M6 1 H10.4 L12.6 3.2 V12.8 H3.4 Q1 12.8 1 10.6 Q1 8.4 3.4 8.4 H6 Z"/><path d="M10.2 1.2 V3.4 H12.4"/><path d="M6 8.4 V10.6 H8.4"/></g></svg>
<div class="t" style="left:517.5px;top:809.0px;font-size:11.7px;color:#333;letter-spacing:-0.78px;">TOP, HANDLE, VR WAND</div>
<svg style="left:500.5px;top:829.5px" width="14" height="14" viewBox="0 0 14 14"><g fill="none" stroke="#444" stroke-width="1.1" stroke-linejoin="round"><path d="M6 1 H10.4 L12.6 3.2 V12.8 H3.4 Q1 12.8 1 10.6 Q1 8.4 3.4 8.4 H6 Z"/><path d="M10.2 1.2 V3.4 H12.4"/><path d="M6 8.4 V10.6 H8.4"/></g></svg>
<div class="t" style="left:517.5px;top:830.6px;font-size:11.7px;color:#333;letter-spacing:-0.86px;">BOTTOM, HANDLE, VR WAND</div>
<svg style="left:485.0px;top:852.9px" width="7" height="11" viewBox="0 0 7 11"><path d="M0.9 0.8 L5.4 5.3 L0.9 9.8" fill="none" stroke="#333" stroke-width="1.5"/></svg>
<div class="t" style="left:499.3px;top:852.3px;font-size:11.7px;color:#333;letter-spacing:-0.60px;">Curves (2)</div>
<div class="abs" style="left:709.2px;top:447.3px;width:27.4px;height:28.5px;background:#fff;border:1px solid #cdcdcd;border-left:none;border-radius:0 2px 2px 0;"></div>
<svg style="left:714.0px;top:455.0px" width="17" height="17" viewBox="0 0 17 17"><path d="M1 1.2 L3.5 3.5 L6 1.2" fill="none" stroke="#333" stroke-width="1.3"/><path d="M3.4 5 V15.8" stroke="#333" stroke-width="1.2"/><path d="M8 2 H16 M5.3 6.25 H16 M5.3 10.25 H16 M5.3 14.25 H16" stroke="#777" stroke-width="1.5"/></svg>

<!-- toolbar -->
<svg style="left:488.0px;top:42.0px" width="12" height="12" viewBox="0 0 12 12"><path d="M5 0.6 L0.6 4.6 L5 8.6 V6 C8 6 9.6 7.4 10.2 11.2 C11.6 6.6 9.4 3.2 5 3.2 Z" fill="#959595"/></svg>
<svg style="left:517.5px;top:42.0px" width="12" height="12" viewBox="0 0 12 12"><path d="M7 0.6 L11.4 4.6 L7 8.6 V6 C4 6 2.4 7.4 1.8 11.2 C0.4 6.6 2.6 3.2 7 3.2 Z" fill="#9c9c9c"/></svg>
<div class="abs" style="left:538.7px;top:37.5px;width:1.0px;height:21.0px;background:#cfcfcf;"></div>
<svg style="left:547.5px;top:41.0px" width="15" height="15" viewBox="0 0 15 15"><path d="M3.4 10.4 L11.6 1.4 L13.6 3.2 L5.4 12.2 L2.6 13 Z" fill="none" stroke="#444" stroke-width="1.1" stroke-linejoin="round"/><path d="M0.4 14.2 H14.6" stroke="#3f6fd8" stroke-width="1.3"/></svg>
<div class="t" style="left:566.8px;top:42.6px;font-size:12.3px;color:#333;letter-spacing:-0.50px;">Sketch</div>
<div class="abs" style="left:612.5px;top:37.5px;width:1.0px;height:21.0px;background:#cfcfcf;"></div>
<svg style="left:620.5px;top:40.0px" width="16" height="16" viewBox="0 0 16 16"><path d="M3.4 0.6 H15.4 V12.4 L12.6 15.4 H0.6 V3.6 Z" fill="#f4f4f4" stroke="#505050" stroke-width="1" stroke-linejoin="round"/><path d="M0.6 3.6 H4 V15.4 M4 3.6 L6 1" fill="none" stroke="#505050" stroke-width="1" stroke-linejoin="round"/><rect x="6" y="6.4" width="9" height="8.6" fill="#858585"/></svg>
<svg style="left:649.5px;top:40.0px" width="16" height="16" viewBox="0 0 16 16"><path d="M8 0.8 A7.2 7.2 0 1 0 14.6 11 L9.8 8 L14.6 5 A7.2 7.2 0 0 0 8 0.8 Z" fill="#8e8e8e" stroke="#505050" stroke-width="1" stroke-linejoin="round"/><circle cx="7" cy="8" r="2.2" fill="#e8e8e8" stroke="#505050" stroke-width="1" stroke-linejoin="round"/><path d="M12 8 H16" stroke="#777" stroke-width="0.9" stroke-dasharray="1.4 1"/></svg>
<svg style="left:677.5px;top:40.0px" width="16" height="16" viewBox="0 0 16 16"><path d="M0.8 14.6 V11 C0.8 6 5 6.8 8 5.6 C10.4 4.6 10.4 2.8 11 1.6 L15.8 2.8 C16 7 13 9 10 10 C7.4 10.8 6.4 11.6 6.4 14.8 Q3.6 16.2 0.8 14.6 Z" fill="#8e8e8e" stroke="#505050" stroke-width="1" stroke-linejoin="round"/><ellipse cx="13.4" cy="2.3" rx="2.5" ry="1.7" fill="#f0f0f0" stroke="#505050" stroke-width="1" stroke-linejoin="round"/></svg>
<svg style="left:706.0px;top:40.0px" width="16" height="16" viewBox="0 0 16 16"><path d="M4.6 2 Q8 0 11 2 C11.4 7 12.6 10 14.6 13.4 Q7.6 17 0.6 13.4 C2.8 10 4 7 4.6 2 Z" fill="#8e8e8e" stroke="#505050" stroke-width="1" stroke-linejoin="round"/><ellipse cx="7.8" cy="2" rx="3.2" ry="1.3" fill="#e4e4e4" stroke="#505050" stroke-width="1" stroke-linejoin="round"/></svg>
<svg style="left:734.0px;top:40.0px" width="16" height="16" viewBox="0 0 16 16"><path d="M0.8 3.6 L10 0.8 L15.4 2.6 V12 L6.4 15.2 L0.8 13 Z" fill="#959595" stroke="#505050" stroke-width="1" stroke-linejoin="round"/><path d="M0.8 3.6 L6.4 5.6 L15.4 2.6 M6.4 5.6 V15.2" fill="none" stroke="#505050" stroke-width="1" stroke-linejoin="round"/><path d="M6.8 6 L15 3.2 V11.6 L6.8 14.6 Z" fill="#ededed"/><path d="M10.8 5.6 V11 M8.8 9 L10.8 11.4 L12.8 9" fill="none" stroke="#222" stroke-width="1.1"/></svg>
<svg style="left:758.5px;top:45.6px" width="9" height="6" viewBox="0 0 9 6"><path d="M0.8 0.8 L4.5 4.4 L8.2 0.8" fill="none" stroke="#222" stroke-width="1.6" stroke-linecap="round" stroke-linejoin="round"/></svg>
<div class="abs" style="left:772.0px;top:37.5px;width:1.0px;height:21.0px;background:#cfcfcf;"></div>
<svg style="left:780.5px;top:40.0px" width="16" height="16" viewBox="0 0 16 16"><path d="M0.8 15 V8 Q0.8 1 8 1 H15.2 V15 Z" fill="#fafafa" stroke="#505050" stroke-width="1" stroke-linejoin="round"/><path d="M2.6 15 V8.6 Q2.6 3 8.4 3 H15.2" fill="none" stroke="#888" stroke-width="0.9"/><path d="M1 8 Q1 1.2 8 1.2 L8.4 3 Q2.8 3 2.8 8.6 Z" fill="#999"/></svg>
<svg style="left:805.3px;top:45.6px" width="9" height="6" viewBox="0 0 9 6"><path d="M0.8 0.8 L4.5 4.4 L8.2 0.8" fill="none" stroke="#222" stroke-width="1.6" stroke-linecap="round" stroke-linejoin="round"/></svg>
<svg style="left:824.0px;top:40.0px" width="16" height="16" viewBox="0 0 16 16"><path d="M0.8 15 V7 L7 1 H15.2 V15 Z" fill="#fafafa" stroke="#505050" stroke-width="1" stroke-linejoin="round"/><path d="M2.6 15 V8 L7.8 3 H15.2" fill="none" stroke="#888" stroke-width="0.9"/><path d="M1 7 L7 1.2 L7.8 3 L2.8 8 Z" fill="#999"/></svg>
<svg style="left:853.0px;top:40.0px" width="16" height="16" viewBox="0 0 16 16"><path d="M0.8 12.6 L6 1 H13.6 L15 3 V15 H3.6 Z" fill="#959595" stroke="#505050" stroke-width="1" stroke-linejoin="round"/><path d="M6 1 L7.6 3 H15 M7.6 3 L3.6 15" fill="none" stroke="#444" stroke-width="0.8"/><path d="M6.2 1.2 H13.4 L14.6 2.8 H7.7 Z" fill="#ddd"/></svg>
<svg style="left:877.0px;top:45.6px" width="9" height="6" viewBox="0 0 9 6"><path d="M0.8 0.8 L4.5 4.4 L8.2 0.8" fill="none" stroke="#222" stroke-width="1.6" stroke-linecap="round" stroke-linejoin="round"/></svg>
<svg style="left:895.5px;top:40.0px" width="16" height="16" viewBox="0 0 16 16"><path d="M0.8 11 L3 13.4 H15.2 V2.6 L13 0.6 H9.6 L4.4 9 H0.8 Z" fill="#efefef" stroke="#505050" stroke-width="1" stroke-linejoin="round"/><path d="M9.6 2.6 C9.6 8 7 11 3 11.6 L3 13 H13 V2.6 Z" fill="#959595" stroke="#505050" stroke-width="1" stroke-linejoin="round"/></svg>
<svg style="left:924.0px;top:40.0px" width="16" height="16" viewBox="0 0 16 16"><path d="M2.6 0.8 H15.2 V12.6 L12.8 15.2 H0.8 V2.8 Z" fill="#f4f4f4" stroke="#505050" stroke-width="1" stroke-linejoin="round"/><path d="M0.8 2.8 H12.8 V15.2 M12.8 2.8 L15.2 0.8" fill="none" stroke="#505050" stroke-width="1" stroke-linejoin="round"/><path d="M5 2.8 V11 H12.6 V2.8" fill="#959595" stroke="#555" stroke-width="0.8"/></svg>
<svg style="left:952.5px;top:40.0px" width="16" height="16" viewBox="0 0 16 16"><path d="M2.6 0.8 H15.2 V12.6 L12.8 15.2 H0.8 V2.8 Z" fill="#f4f4f4" stroke="#505050" stroke-width="1" stroke-linejoin="round"/><path d="M0.8 2.8 H12.8 V15.2 M12.8 2.8 L15.2 0.8" fill="none" stroke="#505050" stroke-width="1" stroke-linejoin="round"/><circle cx="7.2" cy="8.8" r="3.6" fill="#858585" stroke="#505050" stroke-width="1" stroke-linejoin="round"/><circle cx="8.2" cy="8" r="1.6" fill="#b5b5b5"/></svg>
<svg style="left:983.5px;top:40.0px" width="11" height="16" viewBox="0 0 11 16"><path d="M0.6 3 V13 A4.6 2.2 0 0 0 9.8 13 V3 Z" fill="#8e8e8e" stroke="#505050" stroke-width="1" stroke-linejoin="round"/><ellipse cx="5.2" cy="3" rx="4.6" ry="2.2" fill="#ececec" stroke="#505050" stroke-width="1" stroke-linejoin="round"/><path d="M2 14.6 Q5.2 15.8 8.6 14.6" fill="none" stroke="#eee" stroke-width="0.8"/></svg>
<div class="abs" style="left:1004.2px;top:37.5px;width:1.0px;height:21.0px;background:#cfcfcf;"></div>
<svg style="left:1012.5px;top:40.0px" width="16" height="16" viewBox="0 0 16 16"><rect x="0.8" y="0.8" width="14.4" height="14.4" rx="1" fill="#777" stroke="#505050" stroke-width="1" stroke-linejoin="round"/><rect x="1.8" y="1.8" width="5.4" height="5.4" fill="#f0f0f0"/><path d="M8 0.8 V15.2 M0.8 8 H15.2" stroke="#333" stroke-width="1.2"/></svg>
<svg style="left:1036.8px;top:45.6px" width="9" height="6" viewBox="0 0 9 6"><path d="M0.8 0.8 L4.5 4.4 L8.2 0.8" fill="none" stroke="#222" stroke-width="1.6" stroke-linecap="round" stroke-linejoin="round"/></svg>
<svg style="left:1055.5px;top:40.0px" width="16" height="16" viewBox="0 0 16 16"><path d="M0.8 2 L5 0.8 V8 L7 10 V15.2 H3 L0.8 13 Z" fill="#f2f2f2" stroke="#505050" stroke-width="1" stroke-linejoin="round"/><path d="M9 10 L11 8 V0.8 L15.2 2 V15.2 H9 Z" fill="#959595" stroke="#505050" stroke-width="1" stroke-linejoin="round"/><path d="M7 10 H9 V15.2 H7 Z" fill="#bbb" stroke="#505050" stroke-width="1" stroke-linejoin="round"/></svg>
<div class="abs" style="left:1079.2px;top:37.5px;width:1.0px;height:21.0px;background:#cfcfcf;"></div>
<svg style="left:1087.0px;top:40.0px" width="17" height="16" viewBox="0 0 17 16"><circle cx="5.6" cy="8" r="4.9" fill="#f0f0f0" stroke="#505050" stroke-width="1" stroke-linejoin="round"/><circle cx="11.4" cy="8" r="4.9" fill="#f0f0f0" stroke="#505050" stroke-width="1" stroke-linejoin="round"/><path d="M8.5 4.05 A4.9 4.9 0 0 1 8.5 11.95 A4.9 4.9 0 0 1 8.5 4.05 Z" fill="#8e8e8e" stroke="#505050" stroke-width="1" stroke-linejoin="round"/></svg>
<svg style="left:1111.8px;top:45.6px" width="9" height="6" viewBox="0 0 9 6"><path d="M0.8 0.8 L4.5 4.4 L8.2 0.8" fill="none" stroke="#222" stroke-width="1.6" stroke-linecap="round" stroke-linejoin="round"/></svg>
<div class="abs" style="left:1126.2px;top:37.5px;width:1.0px;height:21.0px;background:#cfcfcf;"></div>
<svg style="left:1133.5px;top:40.0px" width="17" height="16" viewBox="0 0 17 16"><path d="M0.8 11 C1 4 6 0.8 12.4 0.8 L14 3.6 C8.6 3.6 4.6 6 3.6 12.6 Z" fill="#9a9a9a"/><path d="M6.4 11.6 C8 8 11 6.4 15.2 6.2 L15.6 9.6 C13 10 11 11.6 10 14.8 Z" fill="#fff" stroke="#505050" stroke-width="1" stroke-linejoin="round"/><path d="M6.6 4.6 L11.6 9 L9.2 9 L10.4 11.6 L9.2 12 L8 9.6 L6.6 11 Z" fill="#222"/></svg>
<svg style="left:1158.3px;top:45.6px" width="9" height="6" viewBox="0 0 9 6"><path d="M0.8 0.8 L4.5 4.4 L8.2 0.8" fill="none" stroke="#222" stroke-width="1.6" stroke-linecap="round" stroke-linejoin="round"/></svg>
<div class="abs" style="left:1172.3px;top:37.5px;width:1.0px;height:21.0px;background:#cfcfcf;"></div>
<svg style="left:1181.5px;top:40.0px" width="16" height="16" viewBox="0 0 16 16"><path d="M0.8 1 L15 2.4 V15 L0.8 13.2 Z" fill="#bdbdbd" stroke="#505050" stroke-width="1" stroke-linejoin="round"/><path d="M7.6 1.8 V8.2 L15 8.8" fill="none" stroke="#505050" stroke-width="1" stroke-linejoin="round"/><path d="M8.2 2 L14.6 2.6 V8.4 L8.2 7.8 Z" fill="#ececec"/></svg>
<svg style="left:1205.3px;top:45.6px" width="9" height="6" viewBox="0 0 9 6"><path d="M0.8 0.8 L4.5 4.4 L8.2 0.8" fill="none" stroke="#222" stroke-width="1.6" stroke-linecap="round" stroke-linejoin="round"/></svg>
<div class="abs" style="left:1219.0px;top:37.5px;width:1.0px;height:21.0px;background:#cfcfcf;"></div>
<svg style="left:1228.5px;top:40.0px" width="15" height="16" viewBox="0 0 15 16"><path d="M0.8 3 L4 0.8 H11 Q14 0.8 14 4 V5.6 H7.4 V10.4 H14 V13.4 L11.6 15.2 H3 L0.8 13.6 Z" fill="#8e8e8e" stroke="#505050" stroke-width="1" stroke-linejoin="round"/><path d="M0.8 3 H8.4 Q11.6 3 11.6 6 M3 5 V15.2" fill="none" stroke="#ddd" stroke-width="1"/></svg>
<svg style="left:1252.3px;top:45.6px" width="9" height="6" viewBox="0 0 9 6"><path d="M0.8 0.8 L4.5 4.4 L8.2 0.8" fill="none" stroke="#222" stroke-width="1.6" stroke-linecap="round" stroke-linejoin="round"/></svg>
<div class="abs" style="left:1266.0px;top:37.5px;width:1.0px;height:21.0px;background:#cfcfcf;"></div>
<svg style="left:1274.5px;top:40.0px" width="16" height="16" viewBox="0 0 16 16"><path d="M0.8 3 L6 0.8 L10.6 1.6 Q15 4 15 8.6 V12.6 L10 15.2 L4.4 14.2 L0.8 12 Z" fill="#efefef" stroke="#505050" stroke-width="1" stroke-linejoin="round"/><path d="M4.4 4.4 V14.2 M4.4 4.4 L0.8 3 M4.4 4.4 L9 2.6 V10.6 L4.4 12.2 M9 2.6 Q13 4.4 13 9 V13.4" fill="none" stroke="#505050" stroke-width="1" stroke-linejoin="round"/><path d="M9.4 3.4 Q12.4 5 12.4 9 V12.8 L10 14.4 V10.8 Z" fill="#959595"/></svg>
<svg style="left:1298.8px;top:45.6px" width="9" height="6" viewBox="0 0 9 6"><path d="M0.8 0.8 L4.5 4.4 L8.2 0.8" fill="none" stroke="#222" stroke-width="1.6" stroke-linecap="round" stroke-linejoin="round"/></svg>
<div class="abs" style="left:1312.8px;top:37.5px;width:1.0px;height:21.0px;background:#cfcfcf;"></div>
<div class="abs" style="left:1320.5px;top:40.0px;width:16.5px;height:16.3px;background:#fff;border:1px solid #b5b5b5;border-radius:2.5px;"></div>
<div class="t" style="left:1323.6px;top:43.5px;font-size:9.6px;color:#444;letter-spacing:-1.20px;">Se</div>
<svg style="left:1345.0px;top:45.6px" width="9" height="6" viewBox="0 0 9 6"><path d="M0.8 0.8 L4.5 4.4 L8.2 0.8" fill="none" stroke="#222" stroke-width="1.6" stroke-linecap="round" stroke-linejoin="round"/></svg>
<div class="abs" style="left:1359.0px;top:37.5px;width:1.0px;height:21.0px;background:#cfcfcf;"></div>
<div class="abs" style="left:1367.5px;top:40.0px;width:16.5px;height:16.3px;background:#fff;border:1px solid #b5b5b5;border-radius:2.5px;"></div>
<div class="t" style="left:1370.3px;top:43.9px;font-size:8.8px;color:#444;letter-spacing:0.23px;">AL</div>
<svg style="left:1392.0px;top:45.6px" width="9" height="6" viewBox="0 0 9 6"><path d="M0.8 0.8 L4.5 4.4 L8.2 0.8" fill="none" stroke="#222" stroke-width="1.6" stroke-linecap="round" stroke-linejoin="round"/></svg>
<div class="abs" style="left:1414.0px;top:35.2px;width:134.0px;height:25.6px;background:#eeeeee;border-radius:3px;"></div>
<div class="t" style="left:1422.4px;top:42.3px;font-size:11.8px;color:#3c3c3c;letter-spacing:-0.29px;">Search tools...</div>
<div class="abs" style="left:1497.6px;top:41.5px;width:27.6px;height:14.8px;background:#f6f6f6;border:1px solid #9a9a9a;border-radius:2px;border-bottom-color:#7c7c7c;"></div>
<div class="t" style="left:1500.2px;top:44.9px;font-size:8.6px;color:#444;font-weight:bold;letter-spacing:-0.34px;">alt/</div>
<svg style="left:1512.2px;top:45.4px" width="11" height="7.4" viewBox="0 0 11 7.4"><path d="M0.4 0.9 H3.4 L7 6.5 H10.6 M6.6 0.9 H10.6" fill="none" stroke="#3c3c3c" stroke-width="1.3"/></svg>
<div class="abs" style="left:1525.9px;top:41.5px;width:13.8px;height:14.8px;background:#f6f6f6;border:1px solid #9a9a9a;border-radius:2px;border-bottom-color:#7c7c7c;"></div>
<div class="t" style="left:1530.4px;top:45.0px;font-size:8.6px;color:#444;font-weight:bold;">c</div>

<!-- canvas -->
<svg style="left:0;top:0" width="1600" height="900" viewBox="0 0 1600 900"><defs><linearGradient id="gb" gradientUnits="userSpaceOnUse" x1="960" y1="500" x2="1130" y2="545"><stop offset="0" stop-color="#232528"/><stop offset="0.55" stop-color="#2e3033"/><stop offset="1" stop-color="#34363a"/></linearGradient><filter id="bl" x="-20%" y="-20%" width="140%" height="140%"><feGaussianBlur stdDeviation="5"/></filter><radialGradient id="gg" gradientUnits="userSpaceOnUse" cx="0" cy="0" r="1" gradientTransform="translate(1234 275) rotate(-40) scale(92 33)"><stop offset="0" stop-color="#d0d2d5"/><stop offset="0.3" stop-color="#b2b4b7" stop-opacity="0.92"/><stop offset="0.6" stop-color="#7c7f83" stop-opacity="0.6"/><stop offset="1" stop-color="#505357" stop-opacity="0"/></radialGradient><linearGradient id="gc" gradientUnits="userSpaceOnUse" x1="1085" y1="170" x2="1298" y2="215"><stop offset="0" stop-color="#2b2d30"/><stop offset="0.12" stop-color="#3a3d41"/><stop offset="0.3" stop-color="#575b60"/><stop offset="0.48" stop-color="#414448"/><stop offset="0.72" stop-color="#2b2d30"/><stop offset="1" stop-color="#323437"/></linearGradient><linearGradient id="ga" gradientUnits="userSpaceOnUse" x1="1130" y1="0" x2="1225" y2="0"><stop offset="0" stop-color="#8d9094"/><stop offset="0.3" stop-color="#c2c4c7"/><stop offset="0.6" stop-color="#8d9094" stop-opacity="0.8"/><stop offset="1" stop-color="#55585c" stop-opacity="0"/></linearGradient><radialGradient id="gp" gradientUnits="userSpaceOnUse" cx="1070" cy="480" r="60"><stop offset="0" stop-color="#565a61"/><stop offset="1" stop-color="#42464c"/></radialGradient><clipPath id="cs"><path d="M1190.0 131.8 C1198.0 132.6 1223.5 133.4 1238.0 136.5 C1252.5 139.6 1266.2 144.5 1277.0 150.5 C1287.8 156.5 1294.9 165.5 1302.5 172.5 C1310.1 179.5 1316.9 185.8 1322.5 192.5 C1328.1 199.2 1333.4 206.2 1336.3 212.5 C1339.2 218.8 1339.6 225.0 1340.0 230.0 C1340.4 235.0 1339.0 240.4 1338.8 242.5 L1350.0 267.5 L1365.0 290.0  C1365.3 291.1 1367.4 293.8 1367.0 296.3 C1366.6 298.8 1363.2 303.6 1362.5 305.0 L1327.5 327.5 L1307.5 340.0 L1300.0 344.5 L1255.0 294.0  C1250.8 295.8 1237.5 300.7 1230.0 305.0 C1222.5 309.3 1215.4 314.6 1210.0 320.0 C1204.6 325.4 1202.2 331.4 1197.5 337.5 C1192.8 343.6 1186.8 347.9 1181.7 356.7 C1176.6 365.4 1170.9 379.4 1166.7 390.0 C1162.5 400.6 1160.9 406.1 1156.7 420.0 C1152.5 433.9 1146.7 455.0 1141.7 473.3 C1136.7 491.6 1134.1 503.9 1126.7 530.0 C1119.3 556.1 1107.3 596.6 1097.3 630.0 C1087.3 663.4 1076.0 700.0 1066.6 730.6 C1057.2 761.2 1045.1 800.0 1040.8 813.9  C1040.1 815.3 1038.8 819.7 1036.7 822.2 C1034.6 824.8 1031.5 828.0 1028.3 829.2 C1025.0 830.4 1022.3 830.4 1017.2 829.6 C1012.1 828.8 1006.1 826.5 997.8 824.4 C989.5 822.2 976.5 819.4 967.2 816.7 C957.9 814.0 947.1 811.1 942.2 808.3 C937.3 805.5 938.7 802.8 938.0 800.0 C937.3 797.2 938.0 793.1 938.0 791.7  C943.1 769.0 957.7 704.8 968.6 655.6 C979.5 606.4 995.3 532.6 1003.3 496.7 C1011.3 460.8 1012.8 458.3 1016.7 440.0 C1020.6 421.7 1023.9 405.0 1026.7 386.7 C1029.5 368.4 1031.3 347.3 1033.3 330.0 C1035.3 312.7 1037.7 292.9 1038.7 283.0 C1039.7 273.1 1039.2 272.8 1039.3 270.7 L1035.3 269.3 L1008.7 240.0 L1008.1 234.7 L1043.3 200.0 L1072.5 173.8  C1074.6 171.9 1079.9 166.5 1085.0 162.5 C1090.1 158.5 1093.5 154.2 1103.0 150.0 C1112.5 145.8 1127.5 140.5 1142.0 137.5 C1156.5 134.5 1182.0 132.8 1190.0 131.8 Z"/></clipPath></defs><path d="M1190.0 131.8 C1198.0 132.6 1223.5 133.4 1238.0 136.5 C1252.5 139.6 1266.2 144.5 1277.0 150.5 C1287.8 156.5 1294.9 165.5 1302.5 172.5 C1310.1 179.5 1316.9 185.8 1322.5 192.5 C1328.1 199.2 1333.4 206.2 1336.3 212.5 C1339.2 218.8 1339.6 225.0 1340.0 230.0 C1340.4 235.0 1339.0 240.4 1338.8 242.5 L1350.0 267.5 L1365.0 290.0  C1365.3 291.1 1367.4 293.8 1367.0 296.3 C1366.6 298.8 1363.2 303.6 1362.5 305.0 L1327.5 327.5 L1307.5 340.0 L1300.0 344.5 L1255.0 294.0  C1250.8 295.8 1237.5 300.7 1230.0 305.0 C1222.5 309.3 1215.4 314.6 1210.0 320.0 C1204.6 325.4 1202.2 331.4 1197.5 337.5 C1192.8 343.6 1186.8 347.9 1181.7 356.7 C1176.6 365.4 1170.9 379.4 1166.7 390.0 C1162.5 400.6 1160.9 406.1 1156.7 420.0 C1152.5 433.9 1146.7 455.0 1141.7 473.3 C1136.7 491.6 1134.1 503.9 1126.7 530.0 C1119.3 556.1 1107.3 596.6 1097.3 630.0 C1087.3 663.4 1076.0 700.0 1066.6 730.6 C1057.2 761.2 1045.1 800.0 1040.8 813.9  C1040.1 815.3 1038.8 819.7 1036.7 822.2 C1034.6 824.8 1031.5 828.0 1028.3 829.2 C1025.0 830.4 1022.3 830.4 1017.2 829.6 C1012.1 828.8 1006.1 826.5 997.8 824.4 C989.5 822.2 976.5 819.4 967.2 816.7 C957.9 814.0 947.1 811.1 942.2 808.3 C937.3 805.5 938.7 802.8 938.0 800.0 C937.3 797.2 938.0 793.1 938.0 791.7  C943.1 769.0 957.7 704.8 968.6 655.6 C979.5 606.4 995.3 532.6 1003.3 496.7 C1011.3 460.8 1012.8 458.3 1016.7 440.0 C1020.6 421.7 1023.9 405.0 1026.7 386.7 C1029.5 368.4 1031.3 347.3 1033.3 330.0 C1035.3 312.7 1037.7 292.9 1038.7 283.0 C1039.7 273.1 1039.2 272.8 1039.3 270.7 L1035.3 269.3 L1008.7 240.0 L1008.1 234.7 L1043.3 200.0 L1072.5 173.8  C1074.6 171.9 1079.9 166.5 1085.0 162.5 C1090.1 158.5 1093.5 154.2 1103.0 150.0 C1112.5 145.8 1127.5 140.5 1142.0 137.5 C1156.5 134.5 1182.0 132.8 1190.0 131.8 Z" fill="url(#gb)" stroke="#1c1d1f" stroke-width="1"/><g clip-path="url(#cs)"><path d="M1038 220 Q1075 223 1130 240 L1255 294 L1367 296 L1340 230 L1300 170 L1190 130 L1085 162 Z" fill="#303235"/><path d="M1258 250 L1290 215 L1303 180 L1298 160 L1400 160 L1400 300 L1329 328 L1284 283.5 L1258 293 L1238 272 Z" fill="#45484c" filter="url(#bl)"/><path d="M1120 230 L1340 190 L1340 330 L1120 420 Z" fill="url(#gg)"/><path d="M1255 295.5 L1284 284 Q1288 283 1292 287 L1331 328 L1300 345.5 L1262 300 Z" fill="#25272a" stroke="#1a1b1d" stroke-width="0.8"/><path d="M1284 284 Q1288 282 1292 285.5 L1333 325.5 L1330 328.5 L1290 288.5 Q1287 286 1283 287.5 Z" fill="#5c5f63"/><path d="M1008 234.5 L1034 215 L1038 221 L1039 270 L1035 269 L1008.7 240 Z" fill="#222427"/><ellipse cx="1188.5" cy="193.6" rx="116" ry="61.3" fill="#2d2f32" stroke="#17181a" stroke-width="1" transform="rotate(1 1188.5 193.6)"/><ellipse cx="1188.8" cy="194" rx="113.5" ry="59" fill="none" stroke="#4a4d51" stroke-width="0.8" opacity="0.8" transform="rotate(1 1188.8 194)"/><ellipse cx="1190" cy="194.6" rx="107.5" ry="54.2" fill="url(#gc)" stroke="#151618" stroke-width="0.9" transform="rotate(1 1190 194.6)"/><ellipse cx="1188.5" cy="226" rx="60" ry="28.5" fill="#26282b" stroke="#17181a" stroke-width="0.9"/><path d="M1130.5 226 Q1137 208 1162 201 Q1188 195.5 1222 201.5" fill="none" stroke="url(#ga)" stroke-width="1.5" stroke-linecap="round"/></g><path d="M1137.5 238.5 Q1160 226.5 1192 226 Q1226 226 1245 232 Q1222 245 1190 245.5 Q1158 246 1137.5 238.5 Z" fill="#fff"/><g clip-path="url(#cs)" fill="none" stroke="#131415" stroke-width="0.9"><path d="M1072 186 Q1085 226 1137 239 Q1188 258 1246 231 Q1296 210 1304 180 L1340 232 L1255 294 L1170 385 L1030 360 L1039 222 Z" fill="none" stroke="none"/><path d="M1038 220 Q1085 223 1128 238"/><path d="M1128 238 Q1190 262 1262 299"/><path d="M1039.3 281.5 Q1120 296 1198 337"/><path d="M1026.5 387 Q1095 400 1153.5 421.5"/><path d="M939 785 Q990 803 1040 814"/><path d="M1034 215 L1039 222 L1039.3 271"/></g><g clip-path="url(#cs)"><path d="M1252.4 293.4 C1248.2 295.2 1234.9 300.1 1227.4 304.4 C1219.9 308.7 1212.8 314.0 1207.4 319.4 C1202.0 324.8 1199.6 330.8 1194.9 336.9 C1190.2 343.0 1184.2 347.3 1179.1 356.1 C1174.0 364.8 1168.3 378.8 1164.1 389.4 C1159.9 399.9 1158.3 405.5 1154.1 419.4 C1149.9 433.3 1144.1 454.4 1139.1 472.7 C1134.1 491.0 1131.5 503.3 1124.1 529.4 C1116.7 555.5 1104.7 596.0 1094.7 629.4 C1084.7 662.8 1073.4 699.4 1064.0 730.0 C1054.6 760.6 1042.5 799.4 1038.2 813.3" fill="none" stroke="#505357" stroke-width="1.3" opacity="0.9"/></g><path d="M1062 434.5 C1096 433 1116 465 1113 497 C1110 528 1075 566 1046 573 C1020 572 1005 535 1011 497 C1018 458 1040 436 1062 434.5 Z" fill="#242628" stroke="#17181a" stroke-width="1"/><ellipse cx="1063.5" cy="491.5" rx="47.5" ry="54.5" fill="url(#gp)" stroke="#1b1c1e" stroke-width="1.2" transform="rotate(8 1063.5 491.5)"/><ellipse cx="1063.5" cy="491.5" rx="45" ry="52" fill="none" stroke="#7b7f85" stroke-width="0.8" opacity="0.7" transform="rotate(8 1063.5 491.5)"/><path d="M1102 455 Q1114 490 1100 524" fill="none" stroke="#8f9399" stroke-width="2.2" opacity="0.75" stroke-linecap="round"/><ellipse cx="1068.5" cy="493" rx="47.5" ry="54.5" fill="none" stroke="#bdbdbd" stroke-width="0.8" stroke-dasharray="4 2.5" opacity="0.55" transform="rotate(8 1068.5 493)"/><path d="M1120.6 282 L988.6 799" stroke="#bdbdbd" stroke-width="0.9" fill="none" stroke-dasharray="9 2.5 2 2.5" opacity="0.55"/><path d="M1006 798 L987 872.5" stroke="#8c8c8c" stroke-width="0.9" fill="none" stroke-dasharray="8 2.5 2 2.5"/><path d="M1222 236 Q1180 268 1155 289 Q1130 305 1118 360 L1107 409 L1062 604 L1006 798.5" stroke="#bdbdbd" stroke-width="0.9" fill="none" stroke-dasharray="6 4" opacity="0.55"/><path d="M1137 238 L1145 228 L1155 215" stroke="#bdbdbd" stroke-width="0.9" fill="none" stroke-dasharray="4 2" opacity="0.6"/><path d="M1049 464 L1098 476 L1086 522 L1037 508 Z" stroke="#bdbdbd" stroke-width="0.9" fill="none" stroke-dasharray="4 2.5" opacity="0.55"/><path d="M1073 470 L1061 515" stroke="#bdbdbd" stroke-width="0.9" fill="none" stroke-dasharray="4 2.5" opacity="0.45"/><circle cx="1087.5" cy="420" r="8.2" stroke="#bdbdbd" stroke-width="0.9" fill="none" stroke-dasharray="3 2" opacity="0.6"/><circle cx="1044.5" cy="600.5" r="8.2" stroke="#bdbdbd" stroke-width="0.9" fill="none" stroke-dasharray="3 2" opacity="0.6"/><circle cx="1074.3" cy="419" r="9.2" fill="#1e1f21"/><circle cx="1074.3" cy="419" r="7" fill="#77797c"/><ellipse cx="1072.8" cy="419" rx="4.5" ry="6.5" fill="#5e6063"/><circle cx="1030.5" cy="599.5" r="9.2" fill="#1e1f21"/><circle cx="1030.5" cy="599.5" r="7" fill="#77797c"/><ellipse cx="1029.0" cy="599.5" rx="4.5" ry="6.5" fill="#5e6063"/><circle cx="1188" cy="260" r="1.8" fill="#d4d4d4" opacity="0.95"/><circle cx="1145" cy="228" r="1.9" fill="#d4d4d4" opacity="0.95"/><circle cx="1155" cy="215" r="1.4" fill="#d4d4d4" opacity="0.7"/><circle cx="1137" cy="238" r="1.3" fill="#d4d4d4" opacity="0.7"/><circle cx="1122" cy="282" r="1.4" fill="#d4d4d4" opacity="0.7"/><circle cx="1155" cy="289" r="1.5" fill="#d4d4d4" opacity="0.7"/><circle cx="1107" cy="409" r="1.6" fill="#d4d4d4" opacity="0.7"/><circle cx="1067" cy="493" r="1.6" fill="#d4d4d4" opacity="0.7"/><circle cx="1062" cy="604" r="1.6" fill="#d4d4d4" opacity="0.7"/><circle cx="1006" cy="798.5" r="2.2" fill="#d4d4d4" opacity="0.95"/><circle cx="987.5" cy="799" r="1.5" fill="#d4d4d4" opacity="0.7"/><circle cx="1049" cy="464" r="1.2" fill="#d4d4d4" opacity="0.7"/><circle cx="1098" cy="476" r="1.2" fill="#d4d4d4" opacity="0.7"/><circle cx="1086" cy="522" r="1.2" fill="#d4d4d4" opacity="0.7"/><circle cx="1037" cy="508" r="1.2" fill="#d4d4d4" opacity="0.7"/><circle cx="987" cy="872.5" r="1.3" fill="#8c8c8c"/><circle cx="1014" cy="665.3" r="3.2" fill="#0d5a4e" stroke="#16181a" stroke-width="1"/><path d="M966 816 l3 1 l3 -1 l3 2 l4 0 l3 2 l4 -1 l4 2" stroke="#bdbdbd" stroke-width="1.6" fill="none" stroke-dasharray="2 1.2"/></svg>

<!-- canvas2 -->
<div class="abs" style="left:990.5px;top:63.0px;width:329.0px;height:48.0px;background:#fab300;"></div>
<div class="t" style="left:998.6px;top:70.0px;font-size:11px;color:#333;letter-spacing:-0.42px;">PCB Design of ASSY, VR WAND</div>
<div class="abs" style="left:1198.0px;top:65.8px;width:91.0px;height:18.3px;background:#fff;border:1px solid #e6d9b0;border-radius:3px;"></div>
<div class="t" style="left:1207.0px;top:70.1px;font-size:10.8px;color:#222;letter-spacing:-0.13px;">Go to assembly</div>
<svg style="left:1298.0px;top:71.0px" width="9.5" height="9.5" viewBox="0 0 9.5 9.5"><path d="M0.5 0.5 L9 9 M9 0.5 L0.5 9" stroke="#6b5a2a" stroke-width="1.1"/></svg>
<div class="abs" style="left:999.4px;top:99.0px;width:310.0px;height:1.2px;background:#7d6a36;"></div>
<svg style="left:1087.0px;top:95.0px" width="10" height="10" viewBox="0 0 10 10"><circle cx="5" cy="5" r="4.2" fill="#fff" stroke="#8a8a8a" stroke-width="1"/></svg>
<svg style="left:1440.0px;top:60.0px" width="160" height="150" viewBox="0 0 160 150"><path d="M85 14 L91 25 H79 Z M85 141 L91 130 H79 Z M22 78 L31 72 V84 Z M148 78 L139 72 V84 Z" fill="#dce4ed"/><path d="M67 24 Q48 30 40 42" fill="none" stroke="#dce4ed" stroke-width="4.5"/><path d="M36 36 L46 44 L35 46 Z" fill="#dce4ed" transform="translate(5 -2)"/><path d="M103 24 Q122 30 130 42" fill="none" stroke="#dce4ed" stroke-width="4.5"/><path d="M134 36 L124 44 L135 46 Z" fill="#dce4ed" transform="translate(-5 -2)"/><path d="M61 54 L80 44 Q83 43 87 44 L116 55 Q118 57 118 60 V92 Q118 95 115 97 L100 110 Q97 112 93 111 L58 101 Q55 100 55 96 V64 Q55 57 61 54 Z" fill="#e4eaf1"/><path d="M66 53.5 L82 46 L111 56 L97 66 Z" fill="#f7f9fb"/><path d="M58 69 Q58 66 62 66.5 L92 74 Q95 75 95 78 V104 Q95 107 91 106 L61 98 Q58 97 58 94 Z" fill="#f7f9fb"/><path d="M100 76 Q100 73 103 71 L113 62 Q115.5 60.5 115.5 64 V91 Q115.5 93 113 95 L103 104 Q100 106 100 102 Z" fill="#f7f9fb"/><circle cx="92" cy="72" r="4.6" fill="#fff"/><ellipse cx="59" cy="62" rx="2.6" ry="3.4" fill="#fff"/><ellipse cx="93" cy="108" rx="4" ry="2.2" fill="#fff"/><ellipse cx="113" cy="58" rx="2.6" ry="2" fill="#fff"/><path d="M51.2 104 V61.5" stroke="#3a3adf" stroke-width="1.3"/><path d="M51.2 104 L92.5 116.4" stroke="#e0302a" stroke-width="1.2"/><path d="M51.2 104 L74.5 82.7" stroke="#7fd07f" stroke-width="1"/><path d="M51.2 104 L58 97.8" stroke="#1f9a1f" stroke-width="1.4"/><text x="46.6" y="60" font-size="10.5" font-weight="bold" fill="#2626d8" font-family="Liberation Sans">Z</text><text x="96" y="123" font-size="10.5" font-weight="bold" fill="#dc1f1f" font-family="Liberation Sans">X</text><text x="75" y="84" font-size="8.5" fill="#8fd88f" font-family="Liberation Sans">Y</text><text x="62" y="91.5" font-size="9.4" fill="#1a1a1a" font-family="Liberation Sans" transform="rotate(9 62 91.5)" textLength="22" lengthAdjust="spacingAndGlyphs">Front</text><text x="78" y="54" font-size="6.6" font-style="italic" font-weight="bold" fill="#333" font-family="Liberation Sans" transform="rotate(20 78 54)">Top</text><text x="102" y="92" font-size="6.4" font-style="italic" font-weight="bold" fill="#333" font-family="Liberation Sans" transform="rotate(-45 102 92)">Right</text></svg>
<svg style="left:1554.5px;top:184.5px" width="16" height="17" viewBox="0 0 16 17"><path d="M1 3.6 L9 0.8 L15 3 L7.6 6.4 Z" fill="#f7f7f7"/><path d="M1 3.6 L7.6 6.4 V16 L1 12.6 Z" fill="#a8a8a8"/><path d="M7.6 6.4 L15 3 V12.4 L7.6 16 Z" fill="#dedede"/><path d="M1 3.6 L9 0.8 L15 3 V12.4 L7.6 16 L1 12.6 Z M1 3.6 L7.6 6.4 L15 3 M7.6 6.4 V16" fill="none" stroke="#555" stroke-width="0.9" stroke-linejoin="round"/></svg>
<svg style="left:1576.5px;top:190.3px" width="8" height="5" viewBox="0 0 8 5"><path d="M0.3 0.3 H7.2 L3.75 4.2 Z" fill="#222"/></svg>
<div class="abs" style="left:1573.6px;top:406.2px;width:27.0px;height:110.8px;background:#fff;border:1px solid #c8c8c8;border-right:none;"></div>
<div class="abs" style="left:1574.0px;top:434.0px;width:26.0px;height:1.0px;background:#c8c8c8;"></div>
<div class="abs" style="left:1574.0px;top:461.5px;width:26.0px;height:1.0px;background:#c8c8c8;"></div>
<div class="abs" style="left:1574.0px;top:489.5px;width:26.0px;height:1.0px;background:#c8c8c8;"></div>
<svg style="left:1579.0px;top:413.5px" width="17" height="17" viewBox="0 0 17 17"><path d="M8.5 0.8 L13.4 4 L15.6 8.4 L13 10 H3 Z" fill="#777" stroke="#444" stroke-width="0.8"/><path d="M8.5 0.8 L6.4 6 L9.6 8.8 L13 5" fill="none" stroke="#333" stroke-width="0.8"/><rect x="1" y="10.6" width="15" height="5.2" rx="1" fill="#fff" stroke="#666" stroke-width="0.9"/><rect x="2.4" y="11.8" width="3" height="3" fill="#555"/><rect x="7" y="11.8" width="3" height="3" fill="#ddd"/><rect x="11.6" y="11.8" width="3" height="3" fill="#999"/></svg>
<svg style="left:1578.5px;top:440.0px" width="17" height="17" viewBox="0 0 17 17"><rect x="0.6" y="0.6" width="8.4" height="6.6" fill="#3f7be0"/><path d="M3.4 0.6 V7.2 M6.2 0.6 V7.2 M0.6 3.2 H9" stroke="#cfe0ff" stroke-width="0.6"/><path d="M4.2 8 L4.2 13 L10.2 16 L16 13 V6 L10.8 3.6 M4.2 8 L10.2 10 L16 6 M10.2 10 V16" fill="none" stroke="#222" stroke-width="1.1" stroke-linejoin="round"/></svg>
<svg style="left:1579.0px;top:468.0px" width="17" height="17" viewBox="0 0 17 17"><rect x="0.6" y="0.4" width="8" height="6.4" fill="#555"/><path d="M3.2 0.4 V6.8 M5.8 0.4 V6.8 M0.6 2.6 H8.6 M0.6 4.8 H8.6" stroke="#ddd" stroke-width="0.5"/><path d="M4.4 8.4 V12.2 L9 14.6 L13.4 12.2 V7.2 L9.4 5.6 M4.4 8.4 L9 10 L13.4 7.2 M9 10 V14.6" fill="none" stroke="#333" stroke-width="0.9"/><path d="M3 6.6 Q1.4 6.8 1.8 9 Q2 10.4 0.8 10.8 Q2 11.2 1.8 12.6 Q1.4 15 3 15.2 M14.4 3.6 Q16 3.8 15.6 6 Q15.4 8.4 16.6 8.8 Q15.4 9.2 15.6 11.6 Q16 14.8 14.4 15.2" fill="none" stroke="#333" stroke-width="0.9"/></svg>
<svg style="left:1579.0px;top:495.0px" width="17" height="17" viewBox="0 0 17 17"><rect x="1.4" y="0.4" width="8" height="6.4" fill="#555"/><path d="M4 0.4 V6.8 M6.6 0.4 V6.8 M1.4 2.6 H9.4 M1.4 4.8 H9.4" stroke="#ddd" stroke-width="0.5"/><path d="M2.6 2.6 Q0.2 8.6 2.6 15.6 M14.2 2.6 Q16.6 8.6 14.2 15.6" fill="none" stroke="#222" stroke-width="1.3"/><path d="M5 7.6 Q7 7 8 9.6 Q9.4 13.6 11.6 13 M11.8 7.6 Q9.6 7.4 8 10.4 Q6.4 13.6 4.6 13.2" fill="none" stroke="#222" stroke-width="1.5"/></svg>
<svg style="left:1518.0px;top:856.5px" width="15" height="12" viewBox="0 0 15 12"><path d="M1 7.4 H9.4 M1 7.4 V10.6 H12 V7.6" fill="none" stroke="#333" stroke-width="1"/><ellipse cx="9.6" cy="4.6" rx="4.4" ry="3.4" fill="none" stroke="#333" stroke-width="1.1"/><ellipse cx="9.6" cy="4.4" rx="1.7" ry="1.2" fill="#333"/><path d="M3 7.6 V9 M5 7.6 V9 M7 7.6 V9" stroke="#333" stroke-width="0.7"/></svg>
<svg style="left:1545.5px;top:856.5px" width="17" height="12" viewBox="0 0 17 12"><path d="M0.8 11 A7.7 7.7 0 0 1 16.2 11 Z" fill="none" stroke="#333" stroke-width="1.2"/><path d="M4 11 A4.5 4.5 0 0 1 13 11" fill="none" stroke="#333" stroke-width="1.6"/></svg>
<svg style="left:1576.0px;top:856.0px" width="15" height="13" viewBox="0 0 15 13"><path d="M7.5 0.6 V10.2 M1.6 2.6 H13.4 M3.6 10.6 H11.4 M1 12.2 H14" fill="none" stroke="#333" stroke-width="1.1"/><path d="M0.8 7 L2.4 3 L4 7 Z M11 7 L12.6 3 L14.2 7 Z" fill="none" stroke="#333" stroke-width="0.9"/></svg>
<div class="abs" style="left:1147.6px;top:671.4px;width:250.3px;height:128.8px;background:#fff;border-radius:1px;box-shadow:0 3px 10px rgba(0,0,0,0.28),0 0 2px rgba(0,0,0,0.12);"></div>
<div class="t" style="left:1152.5px;top:678.0px;font-size:11.2px;color:#222;font-weight:bold;letter-spacing:-0.55px;">Dependencies of Boundary surface 1</div>
<svg style="left:1381.4px;top:679.0px" width="9.5" height="9.5" viewBox="0 0 9.5 9.5"><path d="M0.5 0.5 L9 9 M9 0.5 L0.5 9" stroke="#666" stroke-width="1"/></svg>
<div class="abs" style="left:1147.6px;top:695.6px;width:250.0px;height:64.6px;background:#fff;border:1px solid #dcdcdc;border-left:none;"></div>
<div class="abs" style="left:1147.6px;top:696.4px;width:249.0px;height:20.8px;background:#f6f6f6;"></div>
<div class="abs" style="left:1147.6px;top:738.6px;width:249.0px;height:20.8px;background:#f6f6f6;"></div>
<div class="abs" style="left:1147.6px;top:760.2px;width:250.3px;height:18.8px;background:#ededed;"></div>
<svg style="left:1268.6px;top:766.3px" width="8" height="7" viewBox="0 0 8 7"><path d="M4 0.4 L7.8 6.6 H0.2 Z" fill="#8c8c8c"/></svg>
<div class="abs" style="left:1147.6px;top:779.0px;width:250.0px;height:21.2px;background:#fafafa;border:1px solid #dcdcdc;border-left:none;border-bottom:none;"></div>
<svg style="left:1152.0px;top:700.6px" width="12" height="12" viewBox="0 0 12 12"><g stroke="#666" stroke-width="1" fill="none" stroke-linejoin="round"><path d="M0.8 2.4 L7.4 1.4 L6.8 9.6 L2.4 11.4 Z"/></g><path d="M7.4 2 H11.6 V3.8 H8.8 V5.4 H11 V7.2 H8.8 V9 H7.4 Z" fill="#888"/></svg>
<div class="t" style="left:1173.5px;top:701.4px;font-size:10.8px;color:#333;letter-spacing:-0.62px;">Move boundary 3</div>
<svg style="left:1152.0px;top:722.0px" width="12" height="12" viewBox="0 0 12 12"><g stroke="#666" stroke-width="1" fill="none" stroke-linecap="round"><path d="M1.6 8.6 C1.6 4.8 4.6 6.6 7.2 5.4 C9.8 4.2 8 2.2 9.4 1.6"/><path d="M1.6 8.6 C2.2 10.4 4 11 5.4 10.8" stroke-width="1.1"/><path d="M8.6 1 L11.2 2.8" stroke="#aaa" stroke-width="0.8"/></g></svg>
<div class="t" style="left:1173.5px;top:722.6px;font-size:10.8px;color:#333;letter-spacing:-0.51px;">Bridging curve 1</div>
<svg style="left:1152.0px;top:743.4px" width="12" height="12" viewBox="0 0 12 12"><g stroke="#666" stroke-width="1" fill="none" stroke-linecap="round"><path d="M1.6 8.6 C1.6 4.8 4.6 6.6 7.2 5.4 C9.8 4.2 8 2.2 9.4 1.6"/><path d="M1.6 8.6 C2.2 10.4 4 11 5.4 10.8" stroke-width="1.1"/><path d="M8.6 1 L11.2 2.8" stroke="#aaa" stroke-width="0.8"/></g></svg>
<div class="t" style="left:1173.5px;top:744.0px;font-size:10.8px;color:#333;letter-spacing:-0.46px;">Bridging curve 2</div>
<svg style="left:1152.0px;top:784.0px" width="12" height="12" viewBox="0 0 12 12"><g stroke="#666" stroke-width="1" fill="none"><path d="M2.4 3.6 L8.4 1.6 L9.4 9 L3.4 11 Z"/><path d="M0.6 5.6 L11.4 7.6 M5 0.6 L6.8 12" stroke-width="0.8"/></g></svg>
<div class="t" style="left:1173.5px;top:784.9px;font-size:10.8px;color:#333;letter-spacing:-0.54px;">Boundary surface 1</div>

<!-- tabs -->
<div class="abs" style="left:480.0px;top:874.0px;width:1120.0px;height:26.0px;background:#e4e4e4;"></div>
<div class="abs" style="left:480.0px;top:898.0px;width:1120.0px;height:2.0px;background:#ededed;"></div>
<div class="abs" style="left:479.4px;top:874.0px;width:31.6px;height:23.6px;background:#d8d8d8;"></div>
<svg style="left:487.2px;top:880.5px" width="13" height="13" viewBox="0 0 13 13"><path d="M6.5 0.2 V12.8 M0.2 6.5 H12.8" stroke="#4a4a4a" stroke-width="2"/></svg>
<div class="abs" style="left:512.8px;top:874.0px;width:121.1px;height:23.4px;background:#f1f1f1;border:1px solid #d4d4d4;border-top:none;border-radius:0 0 5px 5px;"></div>
<svg style="left:521.7px;top:878.4px" width="16" height="16" viewBox="0 0 16 16"><path d="M1.8 0.8 H10.6 L14.6 4 V13.4 Q14.6 14.6 13.4 14.6 H3.4 L0.8 12 V1.8 Q0.8 0.8 1.8 0.8 Z" fill="#fff" stroke="#333" stroke-width="1.1" stroke-linejoin="round"/><path d="M1.6 1.6 H10 V10.6 H1.6 Z" fill="#8a8a8a"/><path d="M1.6 1.6 H3.4 V10.6 H1.6 Z M1.6 1.6 H10 V3.2 H1.6Z" fill="#6a6a6a"/><path d="M10 1.6 V10.6 H1.6 M10 10.6 L13.6 13.8" fill="none" stroke="#333" stroke-width="0.9"/></svg>
<div class="t" style="left:540.2px;top:880.9px;font-size:11.7px;color:#5a5a5a;letter-spacing:-0.51px;">ASSY, VR WAND</div>
<div class="abs" style="left:634.6px;top:874.0px;width:166.7px;height:23.4px;background:#f1f1f1;border:1px solid #d4d4d4;border-top:none;border-radius:0 0 5px 5px;"></div>
<svg style="left:643.5px;top:878.4px" width="16" height="16" viewBox="0 0 16 16"><path d="M1.8 0.8 H10.6 L14.6 4 V13.4 Q14.6 14.6 13.4 14.6 H3.4 L0.8 12 V1.8 Q0.8 0.8 1.8 0.8 Z" fill="#fff" stroke="#333" stroke-width="1.1" stroke-linejoin="round"/><path d="M1.6 1.6 H10 V10.6 H1.6 Z" fill="#8a8a8a"/><path d="M1.6 1.6 H3.4 V10.6 H1.6 Z M1.6 1.6 H10 V3.2 H1.6Z" fill="#6a6a6a"/><path d="M10 1.6 V10.6 H1.6 M10 10.6 L13.6 13.8" fill="none" stroke="#333" stroke-width="0.9"/></svg>
<div class="t" style="left:662.7px;top:880.9px;font-size:11.7px;color:#5a5a5a;letter-spacing:-0.60px;">ASSY, HOUSING, VR W...</div>
<div class="abs" style="left:801.6px;top:874.0px;width:166.9px;height:23.4px;background:#f1f1f1;border:1px solid #d4d4d4;border-top:none;border-radius:0 0 5px 5px;"></div>
<svg style="left:811.3px;top:878.4px" width="16" height="16" viewBox="0 0 16 16"><path d="M1.8 0.8 H10.6 L14.6 4 V13.4 Q14.6 14.6 13.4 14.6 H3.4 L0.8 12 V1.8 Q0.8 0.8 1.8 0.8 Z" fill="#fff" stroke="#333" stroke-width="1.1" stroke-linejoin="round"/><path d="M1.6 1.6 H10 V10.6 H1.6 Z" fill="#8a8a8a"/><path d="M1.6 1.6 H3.4 V10.6 H1.6 Z M1.6 1.6 H10 V3.2 H1.6Z" fill="#6a6a6a"/><path d="M10 1.6 V10.6 H1.6 M10 10.6 L13.6 13.8" fill="none" stroke="#333" stroke-width="0.9"/></svg>
<div class="t" style="left:830.5px;top:880.9px;font-size:11.7px;color:#5a5a5a;letter-spacing:-0.52px;">ASSY, ELECTRONICS, ...</div>
<div class="abs" style="left:972.5px;top:874.0px;width:59.3px;height:24.5px;background:#fff;"></div>
<div class="abs" style="left:973.0px;top:896.3px;width:58.3px;height:2.2px;background:#1b4fb7;border-radius:1px;"></div>
<svg style="left:981.8px;top:878.9px" width="16" height="15" viewBox="0 0 16 15"><g stroke="#444" stroke-width="1" fill="#fafafa" stroke-linejoin="round"><path d="M0.8 5 Q0.8 3.8 3.4 3.8 Q6 3.8 6 5 V13 Q6 14.2 3.4 14.2 Q0.8 14.2 0.8 13 Z"/><path d="M6 2.2 Q6 0.8 9.4 0.8 Q13 0.8 13 2.2 V12.6 Q13 14 9.6 14 Q7 14 6 13.4 Z"/><path d="M8.6 1 V13.8" fill="none" stroke-width="0.8"/></g></svg>
<div class="t" style="left:999.7px;top:880.9px;font-size:11.7px;color:#222;letter-spacing:-1.06px;">DFM</div>
<div class="abs" style="left:1033.4px;top:874.0px;width:50.4px;height:23.4px;background:#f1f1f1;border:1px solid #d4d4d4;border-top:none;border-radius:0 0 5px 5px;"></div>
<svg style="left:1043.6px;top:878.9px" width="16" height="15" viewBox="0 0 16 15"><g stroke="#444" stroke-width="1" fill="#fafafa" stroke-linejoin="round"><path d="M0.8 5 Q0.8 3.8 3.4 3.8 Q6 3.8 6 5 V13 Q6 14.2 3.4 14.2 Q0.8 14.2 0.8 13 Z"/><path d="M6 2.2 Q6 0.8 9.4 0.8 Q13 0.8 13 2.2 V12.6 Q13 14 9.6 14 Q7 14 6 13.4 Z"/><path d="M8.6 1 V13.8" fill="none" stroke-width="0.8"/></g></svg>
<div class="t" style="left:1061.0px;top:880.9px;font-size:11.7px;color:#5a5a5a;letter-spacing:-1.20px;">ID</div>
<div class="abs" style="left:1085.1px;top:874.0px;width:100.5px;height:23.4px;background:#f1f1f1;border:1px solid #d4d4d4;border-top:none;border-radius:0 0 5px 5px;"></div>
<svg style="left:1094.0px;top:878.4px" width="16" height="16" viewBox="0 0 16 16"><rect x="0.8" y="0.8" width="14.4" height="14.4" rx="2" fill="#fff" stroke="#333" stroke-width="1.2"/><path d="M2.6 12.6 L6 7 L8.4 10 L10.2 8.2 L13.2 12.6 Z" fill="#222"/><circle cx="11.4" cy="4.6" r="1.3" fill="#222"/></svg>
<div class="t" style="left:1112.7px;top:880.9px;font-size:11.7px;color:#5a5a5a;letter-spacing:-0.26px;">Final Render</div>
<div class="abs" style="left:1186.8px;top:874.0px;width:122.2px;height:23.4px;background:#f1f1f1;border:1px solid #d4d4d4;border-top:none;border-radius:0 0 5px 5px;"></div>
<svg style="left:1195.6px;top:880.3px" width="16" height="13" viewBox="0 0 16 13"><path d="M0.8 1.6 Q0.8 0.8 1.6 0.8 H5.4 L6.8 2.4 H14.2 Q15 2.4 15 3.2 V11.4 Q15 12.2 14.2 12.2 H1.6 Q0.8 12.2 0.8 11.4 Z" fill="#fff" stroke="#444" stroke-width="1.1" stroke-linejoin="round"/></svg>
<div class="t" style="left:1215.3px;top:880.9px;font-size:11.7px;color:#5a5a5a;letter-spacing:-0.14px;">Purchased Parts</div>
<div class="abs" style="left:1310.3px;top:874.0px;width:88.4px;height:23.4px;background:#f1f1f1;border:1px solid #d4d4d4;border-top:none;border-radius:0 0 5px 5px;"></div>
<svg style="left:1318.6px;top:880.3px" width="16" height="13" viewBox="0 0 16 13"><path d="M0.8 1.6 Q0.8 0.8 1.6 0.8 H5.4 L6.8 2.4 H14.2 Q15 2.4 15 3.2 V11.4 Q15 12.2 14.2 12.2 H1.6 Q0.8 12.2 0.8 11.4 Z" fill="#fff" stroke="#444" stroke-width="1.1" stroke-linejoin="round"/></svg>
<div class="t" style="left:1337.4px;top:880.9px;font-size:11.7px;color:#5a5a5a;letter-spacing:-0.19px;">Rendering</div>
<div class="abs" style="left:1399.9px;top:874.0px;width:73.0px;height:23.4px;background:#f1f1f1;border:1px solid #d4d4d4;border-top:none;border-radius:0 0 5px 5px;"></div>
<svg style="left:1408.3px;top:880.3px" width="16" height="13" viewBox="0 0 16 13"><path d="M0.8 1.6 Q0.8 0.8 1.6 0.8 H5.4 L6.8 2.4 H14.2 Q15 2.4 15 3.2 V11.4 Q15 12.2 14.2 12.2 H1.6 Q0.8 12.2 0.8 11.4 Z" fill="#fff" stroke="#444" stroke-width="1.1" stroke-linejoin="round"/></svg>
<div class="t" style="left:1427.2px;top:880.9px;font-size:11.7px;color:#5a5a5a;letter-spacing:-0.33px;">Images</div>
<div class="abs" style="left:1474.2px;top:874.0px;width:105.8px;height:23.4px;background:#f1f1f1;border:1px solid #d4d4d4;border-top:none;border-radius:0 0 5px 5px;"></div>
<svg style="left:1483.2px;top:878.4px" width="16" height="16" viewBox="0 0 16 16"><rect x="0.8" y="0.8" width="14.4" height="14.4" rx="2" fill="#fff" stroke="#333" stroke-width="1.2"/><path d="M3 12.4 C5.4 11.6 7 8 7.4 4.6 C7.6 2.6 8.8 2.8 8.6 4.6 C8.2 8 10 10 13 10.4 C11 9.6 5.6 10.4 3 12.4 Z" fill="none" stroke="#222" stroke-width="1"/></svg>
<div class="t" style="left:1502.0px;top:880.9px;font-size:11.7px;color:#5a5a5a;letter-spacing:-0.35px;">Wand User</div>
<div class="abs" style="left:1548.0px;top:874.0px;width:14.0px;height:24.0px;background:transparent;background:linear-gradient(90deg,rgba(228,228,228,0),#e4e4e4);"></div>
<div class="abs" style="left:1561.0px;top:874.0px;width:39.0px;height:24.0px;background:#e4e4e4;"></div>
<svg style="left:1566.5px;top:881.5px" width="7" height="11" viewBox="0 0 7 11"><path d="M5.6 0.8 L1 5.3 L5.6 9.8" fill="none" stroke="#b5b5b5" stroke-width="1.6"/></svg>
<svg style="left:1587.0px;top:881.5px" width="7" height="11" viewBox="0 0 7 11"><path d="M1 0.8 L5.6 5.3 L1 9.8" fill="none" stroke="#333" stroke-width="1.7"/></svg>

</body></html>
